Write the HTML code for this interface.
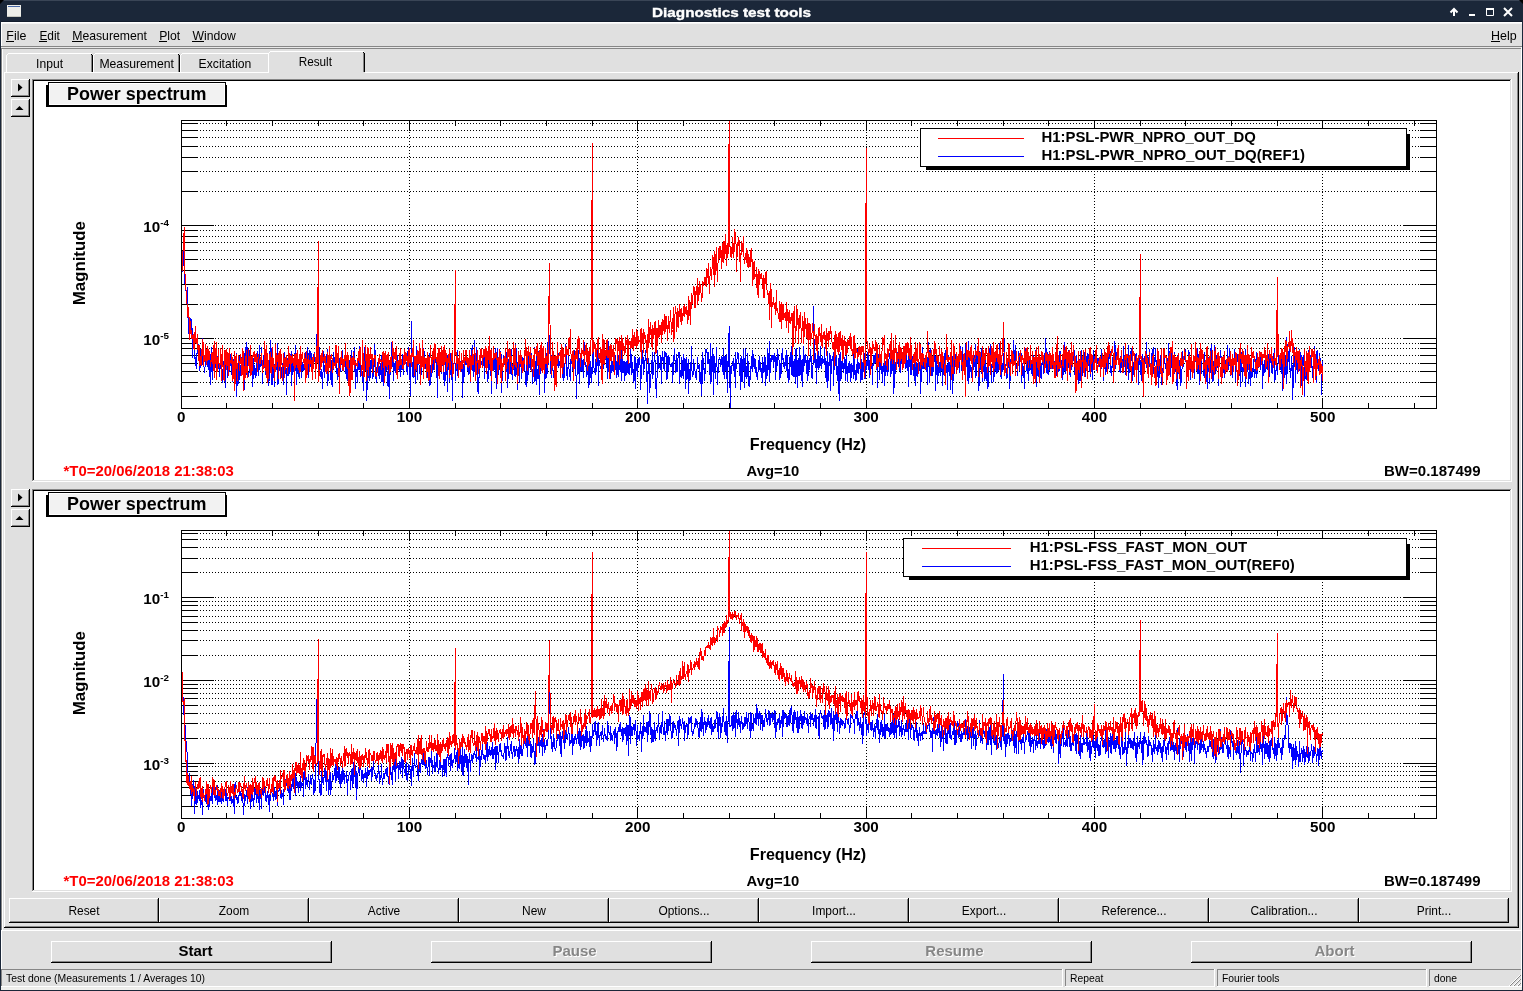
<!DOCTYPE html>
<html><head><meta charset="utf-8"><title>Diagnostics test tools</title>
<style>html,body{margin:0;padding:0;width:1523px;height:991px;overflow:hidden;background:#e0e0e0}
svg text{font-family:"Liberation Sans", sans-serif}</style></head>
<body><svg width="1523" height="991" viewBox="0 0 1523 991" style="display:block">
<rect x="0" y="0" width="1523" height="991" fill="#e0e0e0" />
<rect x="0" y="0" width="1523" height="22" fill="#1b2739" />
<rect x="0" y="0" width="1523" height="1" fill="#3a4556" />
<rect x="0" y="0" width="1" height="991" fill="#1b2739" />
<rect x="1522" y="0" width="1" height="991" fill="#1b2739" />
<rect x="0" y="990" width="1523" height="1" fill="#1b2739" />
<path d="M0 0H4L0 4Z M1523 0H1519L1523 4Z" fill="#000"/>
<rect x="7" y="5" width="14" height="12" fill="#eeeeea" />
<rect x="8" y="6" width="12" height="1" fill="#4a6aa8" />
<rect x="7" y="16" width="14" height="1" fill="#c8c8c0" />
<g fill="none" stroke="#fff" stroke-width="2"><path d="M1454 16 V9.5 M1450.5 12.5 L1454 9 L1457.5 12.5"/><path d="M1486.5 8.5 H1493.5 V15.5 H1486.5 Z" stroke-width="1"/><path d="M1504 8 L1512 16 M1512 8 L1504 16"/></g>
<rect x="1469" y="14" width="6" height="2" fill="#fff" />
<rect x="1486" y="8" width="8" height="2" fill="#fff" />
<rect x="1" y="22" width="1521" height="1" fill="#ffffff" />
<rect x="1" y="23" width="1521" height="1" fill="#f4f4f4" />
<rect x="1" y="22" width="1" height="24" fill="#ffffff" />
<rect x="1" y="21" width="1521" height="1" fill="#121c2c" />
<rect x="6" y="41" width="8" height="1" fill="#000" />
<rect x="39" y="41" width="8" height="1" fill="#000" />
<rect x="72" y="41" width="11" height="1" fill="#000" />
<rect x="159" y="41" width="8" height="1" fill="#000" />
<rect x="192" y="41" width="12" height="1" fill="#000" />
<rect x="1491" y="41" width="9" height="1" fill="#000" />
<rect x="1" y="46" width="1521" height="1" fill="#868686" />
<rect x="1" y="47" width="1521" height="1" fill="#e8e8e8" />
<rect x="1" y="48" width="1521" height="1" fill="#868686" />
<rect x="1" y="49" width="1" height="881" fill="#868686" />
<rect x="2" y="49" width="1" height="881" fill="#ffffff" />
<rect x="1521" y="47" width="1" height="942" fill="#ffffff" />
<rect x="4" y="72" width="1515" height="1" fill="#ffffff" />
<rect x="4" y="72" width="1" height="856" fill="#ffffff" />
<rect x="1517" y="73" width="1" height="854" fill="#868686" />
<rect x="1518" y="72" width="1" height="856" fill="#000" />
<rect x="5" y="926" width="1513" height="1" fill="#868686" />
<rect x="4" y="927" width="1515" height="1" fill="#000" />
<rect x="6" y="53" width="87" height="20" fill="#e0e0e0" />
<rect x="8" y="53" width="84" height="1" fill="#ffffff" />
<rect x="7" y="54" width="1" height="1" fill="#ffffff" />
<rect x="6" y="55" width="1" height="18" fill="#ffffff" />
<rect x="91" y="54" width="1" height="1" fill="#000" />
<rect x="92" y="55" width="1" height="17" fill="#000" />
<rect x="91" y="55" width="1" height="17" fill="#868686" />
<rect x="93" y="53" width="87" height="20" fill="#e0e0e0" />
<rect x="95" y="53" width="84" height="1" fill="#ffffff" />
<rect x="94" y="54" width="1" height="1" fill="#ffffff" />
<rect x="93" y="55" width="1" height="18" fill="#ffffff" />
<rect x="178" y="54" width="1" height="1" fill="#000" />
<rect x="179" y="55" width="1" height="17" fill="#000" />
<rect x="178" y="55" width="1" height="17" fill="#868686" />
<rect x="180" y="53" width="90" height="20" fill="#e0e0e0" />
<rect x="182" y="53" width="87" height="1" fill="#ffffff" />
<rect x="181" y="54" width="1" height="1" fill="#ffffff" />
<rect x="180" y="55" width="1" height="18" fill="#ffffff" />
<rect x="268" y="54" width="1" height="1" fill="#000" />
<rect x="269" y="55" width="1" height="17" fill="#000" />
<rect x="268" y="55" width="1" height="17" fill="#868686" />
<rect x="268" y="51" width="97" height="22" fill="#e0e0e0" />
<rect x="270" y="51" width="94" height="1" fill="#ffffff" />
<rect x="269" y="52" width="1" height="1" fill="#ffffff" />
<rect x="268" y="53" width="1" height="20" fill="#ffffff" />
<rect x="363" y="52" width="1" height="1" fill="#000" />
<rect x="364" y="53" width="1" height="19" fill="#000" />
<rect x="363" y="53" width="1" height="19" fill="#868686" />
<rect x="6" y="72" width="87" height="1" fill="#ffffff" />
<rect x="93" y="72" width="87" height="1" fill="#ffffff" />
<rect x="180" y="72" width="88" height="1" fill="#ffffff" />
<rect x="269" y="72" width="95" height="1" fill="#e0e0e0" />
<rect x="32" y="79" width="1480" height="403" fill="#ffffff" />
<rect x="32" y="79" width="1480" height="1" fill="#868686" />
<rect x="32" y="79" width="1" height="403" fill="#868686" />
<rect x="33" y="80" width="1478" height="1" fill="#000" />
<rect x="33" y="80" width="1" height="401" fill="#000" />
<rect x="33" y="480" width="1479" height="1" fill="#e0e0e0" />
<rect x="1510" y="80" width="1" height="401" fill="#e0e0e0" />
<rect x="32" y="481" width="1480" height="1" fill="#ffffff" />
<rect x="1511" y="79" width="1" height="403" fill="#ffffff" />
<rect x="11" y="79" width="19" height="18" fill="#e0e0e0" />
<rect x="11" y="79" width="18" height="1" fill="#ffffff" />
<rect x="11" y="79" width="1" height="17" fill="#ffffff" />
<rect x="12" y="95" width="17" height="1" fill="#868686" />
<rect x="28" y="80" width="1" height="16" fill="#868686" />
<rect x="11" y="96" width="19" height="1" fill="#000" />
<rect x="29" y="79" width="1" height="18" fill="#000" />
<rect x="11" y="99" width="19" height="18" fill="#e0e0e0" />
<rect x="11" y="99" width="18" height="1" fill="#ffffff" />
<rect x="11" y="99" width="1" height="17" fill="#ffffff" />
<rect x="12" y="115" width="17" height="1" fill="#868686" />
<rect x="28" y="100" width="1" height="16" fill="#868686" />
<rect x="11" y="116" width="19" height="1" fill="#000" />
<rect x="29" y="99" width="1" height="18" fill="#000" />
<path d="M18 83.5 L22.5 87.5 L18 91.5 Z" fill="#000"/>
<path d="M15.5 110 L19.5 106 L23.5 110 Z" fill="#000"/>
<rect x="32" y="489" width="1480" height="403" fill="#ffffff" />
<rect x="32" y="489" width="1480" height="1" fill="#868686" />
<rect x="32" y="489" width="1" height="403" fill="#868686" />
<rect x="33" y="490" width="1478" height="1" fill="#000" />
<rect x="33" y="490" width="1" height="401" fill="#000" />
<rect x="33" y="890" width="1479" height="1" fill="#e0e0e0" />
<rect x="1510" y="490" width="1" height="401" fill="#e0e0e0" />
<rect x="32" y="891" width="1480" height="1" fill="#ffffff" />
<rect x="1511" y="489" width="1" height="403" fill="#ffffff" />
<rect x="11" y="489" width="19" height="18" fill="#e0e0e0" />
<rect x="11" y="489" width="18" height="1" fill="#ffffff" />
<rect x="11" y="489" width="1" height="17" fill="#ffffff" />
<rect x="12" y="505" width="17" height="1" fill="#868686" />
<rect x="28" y="490" width="1" height="16" fill="#868686" />
<rect x="11" y="506" width="19" height="1" fill="#000" />
<rect x="29" y="489" width="1" height="18" fill="#000" />
<rect x="11" y="509" width="19" height="18" fill="#e0e0e0" />
<rect x="11" y="509" width="18" height="1" fill="#ffffff" />
<rect x="11" y="509" width="1" height="17" fill="#ffffff" />
<rect x="12" y="525" width="17" height="1" fill="#868686" />
<rect x="28" y="510" width="1" height="16" fill="#868686" />
<rect x="11" y="526" width="19" height="1" fill="#000" />
<rect x="29" y="509" width="1" height="18" fill="#000" />
<path d="M18 493.5 L22.5 497.5 L18 501.5 Z" fill="#000"/>
<path d="M15.5 520 L19.5 516 L23.5 520 Z" fill="#000"/>
<rect x="9" y="898" width="150" height="25" fill="#e0e0e0" />
<rect x="9" y="898" width="149" height="1" fill="#ffffff" />
<rect x="9" y="898" width="1" height="24" fill="#ffffff" />
<rect x="10" y="921" width="148" height="1" fill="#868686" />
<rect x="157" y="899" width="1" height="23" fill="#868686" />
<rect x="9" y="922" width="150" height="1" fill="#000" />
<rect x="158" y="898" width="1" height="25" fill="#000" />
<rect x="159" y="898" width="150" height="25" fill="#e0e0e0" />
<rect x="159" y="898" width="149" height="1" fill="#ffffff" />
<rect x="159" y="898" width="1" height="24" fill="#ffffff" />
<rect x="160" y="921" width="148" height="1" fill="#868686" />
<rect x="307" y="899" width="1" height="23" fill="#868686" />
<rect x="159" y="922" width="150" height="1" fill="#000" />
<rect x="308" y="898" width="1" height="25" fill="#000" />
<rect x="309" y="898" width="150" height="25" fill="#e0e0e0" />
<rect x="309" y="898" width="149" height="1" fill="#ffffff" />
<rect x="309" y="898" width="1" height="24" fill="#ffffff" />
<rect x="310" y="921" width="148" height="1" fill="#868686" />
<rect x="457" y="899" width="1" height="23" fill="#868686" />
<rect x="309" y="922" width="150" height="1" fill="#000" />
<rect x="458" y="898" width="1" height="25" fill="#000" />
<rect x="459" y="898" width="150" height="25" fill="#e0e0e0" />
<rect x="459" y="898" width="149" height="1" fill="#ffffff" />
<rect x="459" y="898" width="1" height="24" fill="#ffffff" />
<rect x="460" y="921" width="148" height="1" fill="#868686" />
<rect x="607" y="899" width="1" height="23" fill="#868686" />
<rect x="459" y="922" width="150" height="1" fill="#000" />
<rect x="608" y="898" width="1" height="25" fill="#000" />
<rect x="609" y="898" width="150" height="25" fill="#e0e0e0" />
<rect x="609" y="898" width="149" height="1" fill="#ffffff" />
<rect x="609" y="898" width="1" height="24" fill="#ffffff" />
<rect x="610" y="921" width="148" height="1" fill="#868686" />
<rect x="757" y="899" width="1" height="23" fill="#868686" />
<rect x="609" y="922" width="150" height="1" fill="#000" />
<rect x="758" y="898" width="1" height="25" fill="#000" />
<rect x="759" y="898" width="150" height="25" fill="#e0e0e0" />
<rect x="759" y="898" width="149" height="1" fill="#ffffff" />
<rect x="759" y="898" width="1" height="24" fill="#ffffff" />
<rect x="760" y="921" width="148" height="1" fill="#868686" />
<rect x="907" y="899" width="1" height="23" fill="#868686" />
<rect x="759" y="922" width="150" height="1" fill="#000" />
<rect x="908" y="898" width="1" height="25" fill="#000" />
<rect x="909" y="898" width="150" height="25" fill="#e0e0e0" />
<rect x="909" y="898" width="149" height="1" fill="#ffffff" />
<rect x="909" y="898" width="1" height="24" fill="#ffffff" />
<rect x="910" y="921" width="148" height="1" fill="#868686" />
<rect x="1057" y="899" width="1" height="23" fill="#868686" />
<rect x="909" y="922" width="150" height="1" fill="#000" />
<rect x="1058" y="898" width="1" height="25" fill="#000" />
<rect x="1059" y="898" width="150" height="25" fill="#e0e0e0" />
<rect x="1059" y="898" width="149" height="1" fill="#ffffff" />
<rect x="1059" y="898" width="1" height="24" fill="#ffffff" />
<rect x="1060" y="921" width="148" height="1" fill="#868686" />
<rect x="1207" y="899" width="1" height="23" fill="#868686" />
<rect x="1059" y="922" width="150" height="1" fill="#000" />
<rect x="1208" y="898" width="1" height="25" fill="#000" />
<rect x="1209" y="898" width="150" height="25" fill="#e0e0e0" />
<rect x="1209" y="898" width="149" height="1" fill="#ffffff" />
<rect x="1209" y="898" width="1" height="24" fill="#ffffff" />
<rect x="1210" y="921" width="148" height="1" fill="#868686" />
<rect x="1357" y="899" width="1" height="23" fill="#868686" />
<rect x="1209" y="922" width="150" height="1" fill="#000" />
<rect x="1358" y="898" width="1" height="25" fill="#000" />
<rect x="1359" y="898" width="150" height="25" fill="#e0e0e0" />
<rect x="1359" y="898" width="149" height="1" fill="#ffffff" />
<rect x="1359" y="898" width="1" height="24" fill="#ffffff" />
<rect x="1360" y="921" width="148" height="1" fill="#868686" />
<rect x="1507" y="899" width="1" height="23" fill="#868686" />
<rect x="1359" y="922" width="150" height="1" fill="#000" />
<rect x="1508" y="898" width="1" height="25" fill="#000" />
<rect x="1" y="930" width="1521" height="1" fill="#ffffff" />
<rect x="1" y="930" width="1" height="39" fill="#ffffff" />
<rect x="51" y="941" width="281" height="22" fill="#e0e0e0" />
<rect x="51" y="941" width="280" height="1" fill="#ffffff" />
<rect x="51" y="941" width="1" height="21" fill="#ffffff" />
<rect x="52" y="961" width="279" height="1" fill="#868686" />
<rect x="330" y="942" width="1" height="20" fill="#868686" />
<rect x="51" y="962" width="281" height="1" fill="#000" />
<rect x="331" y="941" width="1" height="22" fill="#000" />
<rect x="431" y="941" width="281" height="22" fill="#e0e0e0" />
<rect x="431" y="941" width="280" height="1" fill="#ffffff" />
<rect x="431" y="941" width="1" height="21" fill="#ffffff" />
<rect x="432" y="961" width="279" height="1" fill="#868686" />
<rect x="710" y="942" width="1" height="20" fill="#868686" />
<rect x="431" y="962" width="281" height="1" fill="#000" />
<rect x="711" y="941" width="1" height="22" fill="#000" />
<rect x="811" y="941" width="281" height="22" fill="#e0e0e0" />
<rect x="811" y="941" width="280" height="1" fill="#ffffff" />
<rect x="811" y="941" width="1" height="21" fill="#ffffff" />
<rect x="812" y="961" width="279" height="1" fill="#868686" />
<rect x="1090" y="942" width="1" height="20" fill="#868686" />
<rect x="811" y="962" width="281" height="1" fill="#000" />
<rect x="1091" y="941" width="1" height="22" fill="#000" />
<rect x="1191" y="941" width="281" height="22" fill="#e0e0e0" />
<rect x="1191" y="941" width="280" height="1" fill="#ffffff" />
<rect x="1191" y="941" width="1" height="21" fill="#ffffff" />
<rect x="1192" y="961" width="279" height="1" fill="#868686" />
<rect x="1470" y="942" width="1" height="20" fill="#868686" />
<rect x="1191" y="962" width="281" height="1" fill="#000" />
<rect x="1471" y="941" width="1" height="22" fill="#000" />
<rect x="1" y="969" width="1062" height="1" fill="#868686" />
<rect x="1" y="969" width="1" height="17" fill="#868686" />
<rect x="1" y="986" width="1062" height="1" fill="#ffffff" />
<rect x="1062" y="969" width="1" height="18" fill="#ffffff" />
<rect x="1065" y="969" width="150" height="1" fill="#868686" />
<rect x="1065" y="969" width="1" height="17" fill="#868686" />
<rect x="1065" y="986" width="150" height="1" fill="#ffffff" />
<rect x="1214" y="969" width="1" height="18" fill="#ffffff" />
<rect x="1217" y="969" width="210" height="1" fill="#868686" />
<rect x="1217" y="969" width="1" height="17" fill="#868686" />
<rect x="1217" y="986" width="210" height="1" fill="#ffffff" />
<rect x="1426" y="969" width="1" height="18" fill="#ffffff" />
<rect x="1429" y="969" width="93" height="1" fill="#868686" />
<rect x="1429" y="969" width="1" height="17" fill="#868686" />
<rect x="1429" y="986" width="93" height="1" fill="#ffffff" />
<rect x="1521" y="969" width="1" height="18" fill="#ffffff" />
<rect x="1" y="987" width="1521" height="1" fill="#ececea" />
<rect x="1" y="988" width="1521" height="1" fill="#f0f0ee" />
<rect x="1" y="989" width="1521" height="1" fill="#f0f0ee" />
<rect x="0" y="990" width="1523" height="1" fill="#1b2739" />
<g stroke-width="1" shape-rendering="crispEdges"><path d="M1510 986 L1521 975 M1514 986 L1521 979 M1518 986 L1521 983" stroke="#ffffff" transform="translate(-1 0)"/><path d="M1510 986 L1521 975 M1514 986 L1521 979 M1518 986 L1521 983" stroke="#868686"/></g>
<rect x="181" y="396" width="17" height="1" fill="#000" />
<rect x="1420" y="396" width="17" height="1" fill="#000" />
<rect x="181" y="382" width="17" height="1" fill="#000" />
<rect x="1420" y="382" width="17" height="1" fill="#000" />
<rect x="181" y="371" width="17" height="1" fill="#000" />
<rect x="1420" y="371" width="17" height="1" fill="#000" />
<rect x="181" y="363" width="17" height="1" fill="#000" />
<rect x="1420" y="363" width="17" height="1" fill="#000" />
<rect x="181" y="355" width="17" height="1" fill="#000" />
<rect x="1420" y="355" width="17" height="1" fill="#000" />
<rect x="181" y="348" width="17" height="1" fill="#000" />
<rect x="1420" y="348" width="17" height="1" fill="#000" />
<rect x="181" y="343" width="17" height="1" fill="#000" />
<rect x="1420" y="343" width="17" height="1" fill="#000" />
<rect x="181" y="338" width="33" height="1" fill="#000" />
<rect x="1404" y="338" width="33" height="1" fill="#000" />
<rect x="181" y="304" width="17" height="1" fill="#000" />
<rect x="1420" y="304" width="17" height="1" fill="#000" />
<rect x="181" y="284" width="17" height="1" fill="#000" />
<rect x="1420" y="284" width="17" height="1" fill="#000" />
<rect x="181" y="270" width="17" height="1" fill="#000" />
<rect x="1420" y="270" width="17" height="1" fill="#000" />
<rect x="181" y="259" width="17" height="1" fill="#000" />
<rect x="1420" y="259" width="17" height="1" fill="#000" />
<rect x="181" y="250" width="17" height="1" fill="#000" />
<rect x="1420" y="250" width="17" height="1" fill="#000" />
<rect x="181" y="242" width="17" height="1" fill="#000" />
<rect x="1420" y="242" width="17" height="1" fill="#000" />
<rect x="181" y="236" width="17" height="1" fill="#000" />
<rect x="1420" y="236" width="17" height="1" fill="#000" />
<rect x="181" y="230" width="17" height="1" fill="#000" />
<rect x="1420" y="230" width="17" height="1" fill="#000" />
<rect x="181" y="225" width="33" height="1" fill="#000" />
<rect x="1404" y="225" width="33" height="1" fill="#000" />
<rect x="181" y="191" width="17" height="1" fill="#000" />
<rect x="1420" y="191" width="17" height="1" fill="#000" />
<rect x="181" y="171" width="17" height="1" fill="#000" />
<rect x="1420" y="171" width="17" height="1" fill="#000" />
<rect x="181" y="157" width="17" height="1" fill="#000" />
<rect x="1420" y="157" width="17" height="1" fill="#000" />
<rect x="181" y="146" width="17" height="1" fill="#000" />
<rect x="1420" y="146" width="17" height="1" fill="#000" />
<rect x="181" y="137" width="17" height="1" fill="#000" />
<rect x="1420" y="137" width="17" height="1" fill="#000" />
<rect x="181" y="130" width="17" height="1" fill="#000" />
<rect x="1420" y="130" width="17" height="1" fill="#000" />
<rect x="181" y="123" width="17" height="1" fill="#000" />
<rect x="1420" y="123" width="17" height="1" fill="#000" />
<g shape-rendering="crispEdges" stroke-width="1" fill="none"><path d="M182 396.5H1436" stroke="#000" stroke-dasharray="1 2"/><path d="M182 382.5H1436" stroke="#000" stroke-dasharray="1 2"/><path d="M182 371.5H1436" stroke="#000" stroke-dasharray="1 2"/><path d="M182 363.5H1436" stroke="#000" stroke-dasharray="1 2"/><path d="M182 355.5H1436" stroke="#000" stroke-dasharray="1 2"/><path d="M182 348.5H1436" stroke="#000" stroke-dasharray="1 2"/><path d="M182 343.5H1436" stroke="#000" stroke-dasharray="1 2"/><path d="M182 338.5H1436" stroke="#000" stroke-dasharray="1 2"/><path d="M182 304.5H1436" stroke="#000" stroke-dasharray="1 2"/><path d="M182 284.5H1436" stroke="#000" stroke-dasharray="1 2"/><path d="M182 270.5H1436" stroke="#000" stroke-dasharray="1 2"/><path d="M182 259.5H1436" stroke="#000" stroke-dasharray="1 2"/><path d="M182 250.5H1436" stroke="#000" stroke-dasharray="1 2"/><path d="M182 242.5H1436" stroke="#000" stroke-dasharray="1 2"/><path d="M182 236.5H1436" stroke="#000" stroke-dasharray="1 2"/><path d="M182 230.5H1436" stroke="#000" stroke-dasharray="1 2"/><path d="M182 225.5H1436" stroke="#000" stroke-dasharray="1 2"/><path d="M182 191.5H1436" stroke="#000" stroke-dasharray="1 2"/><path d="M182 171.5H1436" stroke="#000" stroke-dasharray="1 2"/><path d="M182 157.5H1436" stroke="#000" stroke-dasharray="1 2"/><path d="M182 146.5H1436" stroke="#000" stroke-dasharray="1 2"/><path d="M182 137.5H1436" stroke="#000" stroke-dasharray="1 2"/><path d="M182 130.5H1436" stroke="#000" stroke-dasharray="1 2"/><path d="M182 123.5H1436" stroke="#000" stroke-dasharray="1 2"/><path d="M409.5 123V408" stroke="#000" stroke-dasharray="1 2"/><path d="M637.5 123V408" stroke="#000" stroke-dasharray="1 2"/><path d="M866.5 123V408" stroke="#000" stroke-dasharray="1 2"/><path d="M1094.5 123V408" stroke="#000" stroke-dasharray="1 2"/><path d="M1322.5 123V408" stroke="#000" stroke-dasharray="1 2"/></g>
<rect x="226" y="403" width="1" height="5" fill="#000" />
<rect x="226" y="121" width="1" height="5" fill="#000" />
<rect x="272" y="403" width="1" height="5" fill="#000" />
<rect x="272" y="121" width="1" height="5" fill="#000" />
<rect x="318" y="403" width="1" height="5" fill="#000" />
<rect x="318" y="121" width="1" height="5" fill="#000" />
<rect x="363" y="403" width="1" height="5" fill="#000" />
<rect x="363" y="121" width="1" height="5" fill="#000" />
<rect x="409" y="398" width="1" height="10" fill="#000" />
<rect x="409" y="121" width="1" height="10" fill="#000" />
<rect x="455" y="403" width="1" height="5" fill="#000" />
<rect x="455" y="121" width="1" height="5" fill="#000" />
<rect x="500" y="403" width="1" height="5" fill="#000" />
<rect x="500" y="121" width="1" height="5" fill="#000" />
<rect x="546" y="403" width="1" height="5" fill="#000" />
<rect x="546" y="121" width="1" height="5" fill="#000" />
<rect x="592" y="403" width="1" height="5" fill="#000" />
<rect x="592" y="121" width="1" height="5" fill="#000" />
<rect x="637" y="398" width="1" height="10" fill="#000" />
<rect x="637" y="121" width="1" height="10" fill="#000" />
<rect x="683" y="403" width="1" height="5" fill="#000" />
<rect x="683" y="121" width="1" height="5" fill="#000" />
<rect x="729" y="403" width="1" height="5" fill="#000" />
<rect x="729" y="121" width="1" height="5" fill="#000" />
<rect x="774" y="403" width="1" height="5" fill="#000" />
<rect x="774" y="121" width="1" height="5" fill="#000" />
<rect x="820" y="403" width="1" height="5" fill="#000" />
<rect x="820" y="121" width="1" height="5" fill="#000" />
<rect x="866" y="398" width="1" height="10" fill="#000" />
<rect x="866" y="121" width="1" height="10" fill="#000" />
<rect x="911" y="403" width="1" height="5" fill="#000" />
<rect x="911" y="121" width="1" height="5" fill="#000" />
<rect x="957" y="403" width="1" height="5" fill="#000" />
<rect x="957" y="121" width="1" height="5" fill="#000" />
<rect x="1003" y="403" width="1" height="5" fill="#000" />
<rect x="1003" y="121" width="1" height="5" fill="#000" />
<rect x="1048" y="403" width="1" height="5" fill="#000" />
<rect x="1048" y="121" width="1" height="5" fill="#000" />
<rect x="1094" y="398" width="1" height="10" fill="#000" />
<rect x="1094" y="121" width="1" height="10" fill="#000" />
<rect x="1140" y="403" width="1" height="5" fill="#000" />
<rect x="1140" y="121" width="1" height="5" fill="#000" />
<rect x="1185" y="403" width="1" height="5" fill="#000" />
<rect x="1185" y="121" width="1" height="5" fill="#000" />
<rect x="1231" y="403" width="1" height="5" fill="#000" />
<rect x="1231" y="121" width="1" height="5" fill="#000" />
<rect x="1277" y="403" width="1" height="5" fill="#000" />
<rect x="1277" y="121" width="1" height="5" fill="#000" />
<rect x="1322" y="398" width="1" height="10" fill="#000" />
<rect x="1322" y="121" width="1" height="10" fill="#000" />
<rect x="1368" y="403" width="1" height="5" fill="#000" />
<rect x="1368" y="121" width="1" height="5" fill="#000" />
<rect x="1414" y="403" width="1" height="5" fill="#000" />
<rect x="1414" y="121" width="1" height="5" fill="#000" />
<rect x="181" y="120" width="1256" height="1" fill="#000" />
<rect x="181" y="408" width="1256" height="1" fill="#000" />
<rect x="181" y="120" width="1" height="289" fill="#000" />
<rect x="1436" y="120" width="1" height="289" fill="#000" />
<svg x="182" y="121" width="1254" height="287" viewBox="182 121 1254 287" overflow="hidden">
<path d="M181.5 275.5l0 6l1 -18l0 8l1 -11l0 -10l1 9l0 5l0 16l1 6l0 0l1 9l0 0l1 -8l0 21l0 -7l1 32l0 -17l1 20l0 -6l1 -3l0 -6l0 -3l1 2l0 13l1 -5l0 29l1 -17l0 -7l0 1l1 17l0 0l1 14l0 -5l1 -6l0 -2l0 16l1 -28l0 4l1 5l0 -5l1 26l0 -19l0 9l1 -11l0 18l1 -17l0 12l1 -24l0 24l0 2l1 -11l0 8l1 11l0 -4l1 -3l0 -10l0 0l1 -3l0 8l1 6l0 -9l1 12l0 -13l0 2l1 -4l0 15l1 15l0 -24l1 -13l0 14l0 3l1 15l0 -16l1 -2l0 -3l1 7l0 -5l0 16l1 -16l0 -5l1 11l0 -11l1 13l0 2l0 -14l1 12l0 -3l1 2l0 9l1 -15l0 -5l0 -5l1 10l0 12l1 -4l0 13l1 -19l0 1l0 -3l1 14l0 1l1 11l0 -26l1 6l0 -9l0 -2l1 21l0 -10l1 -6l0 11l1 -8l0 7l0 -2l1 -7l0 -8l1 9l0 7l1 9l0 -21l0 23l1 -17l0 -5l1 23l0 -10l1 -11l0 19l0 -13l1 -14l0 43l1 -20l0 8l1 -23l0 22l0 -2l1 -4l0 -21l1 16l0 3l1 -4l0 -9l0 -5l1 5l0 -1l1 19l0 -8l1 -19l0 36l0 -26l1 14l0 -26l1 -9l0 32l1 -13l0 -15l0 26l1 0l0 4l1 -6l0 -20l1 -1l0 6l0 -3l1 12l0 0l1 -3l0 25l1 -15l0 -14l0 3l1 9l0 2l1 6l0 -7l1 -5l0 6l0 4l1 -24l0 18l1 -11l0 17l1 -30l0 19l0 5l1 -12l0 9l1 -3l0 -16l1 36l0 -16l0 10l1 -22l0 13l1 -16l0 9l1 13l0 -8l0 -15l1 3l0 17l1 -14l0 15l1 -4l0 -9l0 26l1 -8l0 -26l1 20l0 -31l1 44l0 -2l0 -34l1 20l0 16l1 -13l0 -8l1 20l0 3l0 -21l1 -3l0 -6l1 1l0 -3l1 30l0 -5l0 -36l1 36l0 4l1 -24l0 -4l1 3l0 -9l0 7l1 21l0 -6l1 3l0 -11l1 21l0 -20l0 1l1 -13l0 12l1 -4l0 5l1 16l0 -14l0 27l1 -36l0 0l1 11l0 6l1 -3l0 -12l0 -7l1 1l0 4l1 27l0 -34l1 7l0 16l0 -14l1 -1l0 12l1 -14l0 13l0 -9l1 -16l0 12l1 27l0 -25l1 -6l0 5l0 13l1 5l0 -7l1 9l0 -20l1 -2l0 -8l0 9l1 5l0 15l1 -13l0 -2l1 6l0 2l0 -6l1 0l0 5l1 -8l0 -9l1 6l0 19l0 -10l1 -15l0 -5l1 30l0 -24l1 8l0 -1l0 -10l1 2l0 14l1 -5l0 -8l1 19l0 -8l0 6l1 -13l0 -3l1 4l0 -6l1 19l0 -4l0 1l1 -4l0 -12l1 -36l0 16l1 20l0 -36l0 16l1 29l0 13l1 2l0 -5l1 0l0 2l0 -4l1 19l0 -9l1 -15l0 -13l1 26l0 -9l0 5l1 -16l0 12l1 1l0 -16l1 31l0 -37l0 14l1 4l0 14l1 -24l0 -3l1 21l0 5l0 -24l1 29l0 -24l1 26l0 -17l1 0l0 -15l0 -2l1 9l0 4l1 -9l0 4l1 -3l0 16l0 -18l1 24l0 -2l1 -12l0 11l1 -5l0 1l0 -14l1 13l0 -2l1 -9l0 0l1 5l0 5l0 -20l1 19l0 -1l1 -8l0 -2l1 9l0 -9l0 11l1 9l0 -17l1 4l0 15l1 -17l0 -8l0 15l1 12l0 -22l1 11l0 -9l1 -12l0 16l0 7l1 -9l0 -3l1 -10l0 12l1 -1l0 -16l0 8l1 34l0 -28l1 16l0 -7l1 2l0 -7l0 18l1 -28l0 15l1 -23l0 17l1 13l0 -19l0 19l1 -10l0 0l1 15l0 -10l1 19l0 -16l0 -4l1 -8l0 -15l1 23l0 -7l1 6l0 1l0 30l1 -21l0 -13l1 -13l0 21l1 6l0 -11l0 -8l1 -1l0 17l1 -20l0 11l1 -2l0 4l0 8l1 -15l0 13l1 -19l0 -13l1 10l0 19l0 2l1 7l0 -15l1 4l0 -9l1 4l0 5l0 4l1 -9l0 12l1 -7l0 -8l1 18l0 -27l0 1l1 1l0 22l1 7l0 -19l1 -6l0 3l0 11l1 1l0 -18l1 6l0 -8l1 30l0 -12l0 6l1 7l0 -28l1 40l0 -29l1 5l0 -8l0 2l1 -3l0 -23l1 13l0 0l1 22l0 3l0 -21l1 11l0 -7l1 9l0 -8l1 -7l0 3l0 -8l1 6l0 13l1 -3l0 -7l1 10l0 -1l0 -12l1 3l0 15l1 -13l0 -4l1 2l0 -8l0 11l1 10l0 -19l1 7l0 -4l1 0l0 -3l0 8l1 -1l0 6l1 6l0 -22l1 -3l0 14l0 -16l1 27l0 -10l1 31l0 -38l1 4l0 -41l0 26l1 30l0 -10l1 11l0 -23l1 17l0 -11l0 10l1 13l0 -20l1 -10l0 -7l1 23l0 10l0 -28l1 4l0 0l1 18l0 0l1 -9l0 7l0 -9l1 5l0 7l1 -17l0 -5l1 -4l0 17l0 5l1 -19l0 7l1 7l0 3l1 1l0 -8l0 3l1 -3l0 16l1 -15l0 2l1 16l0 5l0 -32l1 31l0 -19l1 5l0 1l0 5l1 -6l0 -18l1 17l0 -15l1 -3l0 15l0 -3l1 -1l0 -8l1 16l0 -12l1 39l0 -34l0 -1l1 11l0 -9l1 -8l0 12l1 -7l0 -4l0 4l1 -1l0 13l1 -21l0 13l1 -11l0 25l0 -16l1 19l0 3l1 -26l0 21l1 -25l0 17l0 -15l1 34l0 -35l1 -2l0 15l1 0l0 7l0 5l1 -12l0 -16l1 23l0 -17l1 41l0 -16l0 -18l1 0l0 0l1 -7l0 4l1 0l0 -1l0 18l1 -19l0 -1l1 -10l0 25l1 -13l0 4l0 10l1 -13l0 4l1 -1l0 -4l1 -2l0 11l0 -15l1 16l0 25l1 -28l0 -1l1 -9l0 1l0 16l1 -22l0 0l1 -1l0 9l1 5l0 3l0 -11l1 5l0 10l1 -11l0 9l1 2l0 -4l0 12l1 -26l0 -5l1 -6l0 24l1 2l0 -16l0 21l1 -36l0 28l1 7l0 -5l1 -23l0 11l0 12l1 -13l0 34l1 -14l0 16l1 -29l0 -2l0 6l1 -10l0 1l1 5l0 -1l1 -4l0 7l0 1l1 -4l0 -5l1 -3l0 23l1 -32l0 11l0 5l1 9l0 -10l1 20l0 -10l1 7l0 -10l0 -9l1 10l0 -6l1 10l0 -15l1 35l0 -24l0 -1l1 -2l0 -8l1 12l0 -20l1 16l0 2l0 -7l1 16l0 -29l1 15l0 25l1 -11l0 -30l0 30l1 -7l0 4l1 -9l0 -13l1 5l0 14l0 -20l1 6l0 35l1 -22l0 -2l1 -6l0 3l0 -10l1 3l0 1l1 11l0 -3l1 -6l0 -10l0 4l1 32l0 -30l1 3l0 18l1 -10l0 2l0 -7l1 -11l0 21l1 -24l0 20l1 10l0 -7l0 5l1 -27l0 13l1 12l0 -23l1 24l0 -26l0 -6l1 7l0 8l1 30l0 -27l1 6l0 -5l0 1l1 18l0 -21l1 5l0 -10l1 17l0 5l0 -4l1 -5l0 -12l1 1l0 4l1 5l0 -4l0 -3l1 21l0 2l1 3l0 -15l1 -15l0 24l0 -2l1 -22l0 18l1 -13l0 -2l1 -1l0 11l0 -19l1 5l0 -2l1 30l0 -2l1 -18l0 2l0 -2l1 18l0 -34l1 27l0 6l1 -25l0 -3l0 32l1 -10l0 -5l1 9l0 -27l1 28l0 15l0 -14l1 -13l0 -13l1 16l0 -21l1 17l0 4l0 -4l1 -10l0 9l1 -6l0 33l1 -29l0 15l0 -19l1 -6l0 24l1 -35l0 31l1 -17l0 -4l0 11l1 -28l0 5l1 27l0 3l1 7l0 -23l0 8l1 -1l0 3l1 13l0 -7l1 2l0 -8l0 2l1 1l0 7l1 1l0 -19l1 -1l0 10l0 -1l1 -11l0 14l1 -3l0 -1l1 -4l0 9l0 2l1 -7l0 -1l1 4l0 8l1 6l0 -18l0 -10l1 25l0 -11l1 -6l0 -9l0 -7l1 15l0 13l1 7l0 -7l1 -10l0 -12l0 11l1 14l0 -3l1 8l0 -16l1 -10l0 7l0 -4l1 13l0 -13l1 7l0 -7l1 -5l0 7l0 -9l1 19l0 -16l1 45l0 -13l1 -20l0 -1l0 -5l1 -9l0 23l1 -15l0 25l1 -23l0 3l0 7l1 0l0 -12l1 3l0 10l1 -10l0 3l0 13l1 -35l0 19l1 1l0 3l1 3l0 8l0 -11l1 9l0 -11l1 1l0 23l1 -26l0 23l0 -18l1 -5l0 16l1 -10l0 15l1 -17l0 -15l0 20l1 -24l0 21l1 1l0 2l1 4l0 -16l0 8l1 3l0 2l1 -21l0 15l1 -5l0 25l0 -29l1 7l0 2l1 1l0 2l1 0l0 -12l0 4l1 3l0 -9l1 14l0 -5l1 -5l0 -3l0 9l1 -10l0 0l1 10l0 -8l1 22l0 -8l0 -3l1 -26l0 30l1 -1l0 -15l1 21l0 -9l0 11l1 -26l0 20l1 -3l0 -8l1 10l0 -3l0 1l1 -8l0 12l1 -6l0 -12l1 22l0 -17l0 9l1 5l0 -7l1 -12l0 21l1 -24l0 17l0 -8l1 7l0 3l1 -25l0 34l1 -15l0 -1l0 -5l1 4l0 9l1 -11l0 19l1 -9l0 -10l0 10l1 3l0 -6l1 -14l0 18l1 1l0 -17l0 -6l1 24l0 -1l1 -10l0 -14l1 9l0 16l0 -14l1 3l0 5l1 9l0 5l1 -26l0 13l0 3l1 16l0 -31l1 11l0 -3l1 11l0 -4l0 -12l1 -2l0 9l1 -8l0 -2l1 15l0 17l0 -21l1 10l0 -26l1 -2l0 13l1 -6l0 14l0 3l1 -11l0 -1l1 -4l0 -8l1 17l0 -10l0 3l1 43l0 -32l1 2l0 -15l1 9l0 -1l0 26l1 -9l0 -1l1 -16l0 -6l1 18l0 -27l0 16l1 7l0 -10l1 -5l0 -7l1 15l0 3l0 9l1 18l0 -16l1 -7l0 -24l1 10l0 8l0 -8l1 7l0 -2l1 4l0 -14l1 28l0 -19l0 -1l1 -12l0 9l1 -3l0 11l1 1l0 1l0 -19l1 2l0 3l1 -3l0 26l1 -2l0 -17l0 -4l1 -1l0 15l1 -13l0 5l1 4l0 0l0 0l1 0l0 -3l1 -1l0 20l1 -14l0 -12l0 5l1 -12l0 -1l1 24l0 -6l1 -12l0 17l0 -15l1 15l0 -7l1 -12l0 2l1 -2l0 22l0 9l1 -13l0 3l1 4l0 -20l1 5l0 5l0 8l1 -21l0 24l1 -15l0 -5l1 2l0 13l0 15l1 -16l0 -15l1 21l0 -14l1 -3l0 -3l0 35l1 -24l0 10l1 -16l0 16l1 -33l0 17l0 3l1 8l0 2l1 -4l0 -13l1 6l0 -1l0 2l1 8l0 2l1 3l0 -2l1 -16l0 -5l0 4l1 8l0 -1l1 -3l0 6l0 11l1 -9l0 11l1 -23l0 35l1 -43l0 31l0 -10l1 -15l0 0l1 22l0 -12l1 5l0 -18l0 -6l1 0l0 1l1 4l0 9l1 0l0 -1l0 -10l1 17l0 5l1 -31l0 40l1 -17l0 -11l0 26l1 -33l0 0l1 46l0 -40l1 3l0 15l0 -4l1 -2l0 12l1 -31l0 15l1 9l0 5l0 8l1 -23l0 -1l1 -2l0 0l1 2l0 1l0 5l1 -10l0 1l1 14l0 -6l1 -17l0 3l0 19l1 8l0 -22l1 0l0 14l1 -16l0 16l0 -6l1 28l0 -31l1 5l0 -26l1 -14l0 16l0 22l1 47l0 -45l1 7l0 -8l1 -1l0 -1l0 -2l1 9l0 -12l1 8l0 0l1 21l0 -32l0 -3l1 16l0 -5l1 -8l0 -3l1 11l0 -2l0 -8l1 19l0 3l1 -17l0 31l1 -14l0 -4l0 -15l1 5l0 20l1 -21l0 -11l1 16l0 10l0 12l1 -39l0 27l1 2l0 1l1 -25l0 23l0 -17l1 3l0 23l1 1l0 0l1 -20l0 -1l0 14l1 -20l0 -3l1 15l0 -21l1 7l0 7l0 1l1 3l0 -10l1 2l0 12l1 -5l0 1l0 5l1 6l0 -4l1 -6l0 -9l1 9l0 -1l0 -12l1 10l0 5l1 -3l0 6l1 6l0 -24l0 26l1 -19l0 4l1 -11l0 2l1 27l0 -26l0 -2l1 14l0 7l1 -5l0 -25l1 9l0 4l0 8l1 -28l0 40l1 -17l0 -4l1 -5l0 6l0 -2l1 -4l0 4l1 -4l0 12l1 -10l0 0l0 -4l1 6l0 20l1 -16l0 -6l1 8l0 -5l0 -11l1 8l0 2l1 1l0 19l1 -16l0 14l0 -9l1 5l0 -20l1 6l0 -11l1 18l0 -4l0 3l1 1l0 2l1 -13l0 6l1 9l0 -1l0 -19l1 9l0 13l1 10l0 -10l1 -7l0 -9l0 23l1 -24l0 3l1 -12l0 27l1 2l0 -6l0 -18l1 25l0 -14l1 -3l0 17l1 -27l0 20l0 14l1 -13l0 -22l1 23l0 16l1 -22l0 -8l0 12l1 -22l0 28l1 -1l0 -19l1 9l0 10l0 0l1 12l0 -27l1 12l0 -25l1 16l0 3l0 -1l1 -4l0 -6l1 11l0 1l1 14l0 -15l0 -9l1 19l0 -14l1 -3l0 11l1 -15l0 -6l0 2l1 10l0 16l1 2l0 -5l1 -17l0 -51l0 20l1 27l0 6l1 9l0 -14l1 10l0 -1l0 21l1 -29l0 2l1 -5l0 18l1 -3l0 -11l0 11l1 -1l0 -19l1 22l0 -6l1 -6l0 7l0 -1l1 0l0 -3l1 5l0 -17l1 30l0 -20l0 14l1 -10l0 14l1 12l0 -36l1 25l0 4l0 -10l1 -17l0 12l1 -10l0 35l1 -31l0 8l0 -6l1 -2l0 1l1 -8l0 33l1 -29l0 2l0 8l1 -1l0 -9l1 18l0 -20l0 13l1 -1l0 14l1 -22l0 29l1 13l0 -33l0 -11l1 -4l0 28l1 -3l0 -16l1 -1l0 2l0 6l1 -5l0 9l1 -7l0 -8l1 4l0 -2l0 21l1 -13l0 -15l1 29l0 -15l1 3l0 3l0 -8l1 -3l0 11l1 -8l0 17l1 -6l0 -12l0 0l1 7l0 -5l1 13l0 -26l1 5l0 4l0 7l1 12l0 -10l1 5l0 4l1 -30l0 23l0 -19l1 16l0 4l1 -9l0 -1l1 9l0 9l0 -14l1 -8l0 20l1 0l0 -17l1 9l0 -2l0 -2l1 -14l0 25l1 -18l0 18l1 -16l0 4l0 3l1 -17l0 13l1 -13l0 9l1 16l0 -18l0 5l1 -4l0 -4l1 6l0 -10l1 32l0 -21l0 13l1 -21l0 6l1 -6l0 8l1 -1l0 -7l0 -2l1 9l0 -10l1 35l0 -16l1 -10l0 -2l0 -3l1 -4l0 27l1 -18l0 -5l1 13l0 2l0 -6l1 17l0 -13l1 -6l0 8l1 -1l0 -24l0 39l1 -19l0 -5l1 -1l0 7l1 8l0 0l0 -11l1 7l0 -6l1 -12l0 1l1 7l0 15l0 -10l1 -21l0 28l1 -5l0 -7l1 9l0 23l0 -30l1 -15l0 39l1 -25l0 4l1 -1l0 0l0 0l1 -13l0 9l1 5l0 -14l1 18l0 -5l0 -7l1 5l0 9l1 -17l0 3l1 2l0 -2l0 7l1 -6l0 -1l1 4l0 -9l1 -2l0 0l0 17l1 -15l0 11l1 6l0 -3l1 -14l0 33l0 -13l1 -12l0 -6l1 19l0 -18l1 4l0 14l0 -18l1 0l0 13l1 -5l0 6l1 10l0 -22l0 9l1 -7l0 25l1 -19l0 -4l1 14l0 -13l0 2l1 -5l0 4l1 6l0 -5l1 -6l0 32l0 2l1 -23l0 -9l1 7l0 -21l1 18l0 3l0 -14l1 14l0 -10l1 4l0 0l1 9l0 -6l0 0l1 -8l0 27l1 -34l0 -8l1 40l0 -5l0 -27l1 10l0 -12l1 27l0 -7l1 7l0 -2l0 -10l1 8l0 -15l1 -1l0 6l1 -2l0 -4l0 35l1 -32l0 8l1 17l0 -18l1 0l0 7l0 3l1 -5l0 -5l1 -7l0 17l1 -20l0 3l0 -2l1 29l0 -31l1 20l0 -9l1 -10l0 -3l0 23l1 -25l0 31l1 -16l0 2l1 5l0 17l0 -25l1 7l0 -16l1 13l0 7l1 -8l0 -9l0 31l1 -36l0 0l1 6l0 34l1 -25l0 -3l0 10l1 -3l0 -16l1 -2l0 2l1 17l0 -9l0 -8l1 12l0 -7l1 -1l0 6l1 -13l0 19l0 -12l1 -5l0 -9l1 13l0 4l1 14l0 -31l0 2l1 13l0 8l1 -7l0 -7l1 17l0 -29l0 27l1 -13l0 9l1 -10l0 22l1 5l0 -43l0 27l1 -10l0 20l1 -11l0 -2l0 6l1 -3l0 10l1 -10l0 -4l1 6l0 -15l0 10l1 -7l0 9l1 -22l0 33l1 -26l0 24l0 -24l1 1l0 10l1 0l0 28l1 -9l0 -31l0 12l1 7l0 -9l1 -12l0 17l1 16l0 -6l0 3l1 -26l0 11l1 17l0 -26l1 15l0 9l0 -25l1 27l0 -9l1 -4l0 21l1 -10l0 8l0 -36l1 -2l0 0l1 24l0 -28l1 38l0 -9l0 4l1 -18l0 -7l1 29l0 -32l1 21l0 6l0 -3l1 -5l0 -7l1 -12l0 24l1 -5l0 4l0 -18l1 1l0 15l1 -7l0 -20l1 29l0 -9l0 12l1 3l0 -23l1 14l0 2l1 -5l0 3l0 -2l1 -28l0 19l1 10l0 2l1 1l0 -4l0 11l1 -1l0 -15l1 -2l0 2l1 10l0 -13l0 29l1 -14l0 -13l1 -4l0 5l1 3l0 -2l0 -1l1 -22l0 25l1 -15l0 3l1 21l0 -30l0 30l1 -10l0 0l1 9l0 2l1 -19l0 1l0 -6l1 19l0 -10l1 -7l0 0l1 0l0 29l0 -21l1 3l0 11l1 -9l0 0l1 22l0 -11l0 -23l1 -2l0 -4l1 22l0 -14l1 13l0 -14l0 18l1 -7l0 14l1 -19l0 -3l1 -2l0 5l0 4l1 8l0 -9l1 11l0 -21l1 18l0 -18l0 11l1 -2l0 -1l1 -3l0 -9l1 8l0 28l0 -18l1 -2l0 9l1 -19l0 20l1 -11l0 -3l0 14l1 1l0 -15l1 16l0 -13l1 -5l0 -2l0 6l1 -7l0 16l1 -18l0 -2l1 4l0 -20l0 8l1 27l0 -24l1 25l0 -21l1 13l0 9l0 -18l1 -5l0 19l1 -4l0 -6l1 1l0 0l0 7l1 0l0 -15l1 10l0 -6l1 10l0 -6l0 0l1 4l0 7l1 3l0 -23l1 8l0 9l0 -5l1 0l0 7l1 -1l0 -19l1 7l0 -7l0 0l1 26l0 -17l1 -1l0 20l1 -10l0 -10l0 15l1 -6l0 -26l1 31l0 0l1 -16l0 -3l0 15l1 -13l0 0l1 11l0 -17l1 16l0 -8l0 16l1 -21l0 23l1 -12l0 -10l1 9l0 -5l0 -2l1 -5l0 9l1 -10l0 24l1 -13l0 -2l0 11l1 -15l0 11l1 -3l0 1l1 19l0 0l0 -15l1 12l0 -21l1 8l0 13l1 -30l0 23l0 4l1 -4l0 -11l1 3l0 -8l1 -5l0 21l0 3l1 -19l0 19l1 -10l0 -10l1 1l0 7l0 -11l1 1l0 5l1 12l0 -16l1 1l0 20l0 -16l1 0l0 3l1 16l0 -20l1 -9l0 18l0 -14l1 4l0 0l1 3l0 -8l1 8l0 9l0 -6l1 -6l0 5l1 -5l0 6l1 2l0 -3l0 1l1 -5l0 -3l1 12l0 -19l1 11l0 6l0 -2l1 -6l0 22l1 -22l0 3l1 -2l0 15l0 -7l1 4l0 -14l1 0l0 7l0 -2l1 6l0 -18l1 6l0 -5l1 15l0 -16l0 19l1 6l0 -1l1 -17l0 7l1 7l0 -18l0 25l1 -13l0 -24l1 7l0 20l1 -7l0 -3l0 -6l1 3l0 -5l1 6l0 -9l1 22l0 -7l0 8l1 2l0 -16l1 11l0 -14l1 11l0 -3l0 9l1 2l0 -26l1 17l0 0l1 -6l0 10l0 7l1 -15l0 10l1 -7l0 -4l1 21l0 -24l0 -10l1 27l0 -5l1 3l0 -16l1 -6l0 9l0 3l1 -6l0 26l1 -10l0 -5l1 -6l0 11l0 -7l1 -9l0 2l1 15l0 -18l1 8l0 7l0 -9l1 -1l0 26l1 -37l0 15l1 3l0 -6l0 15l1 -15l0 21l1 -26l0 4l1 3l0 10l0 -1l1 -14l0 1l1 0l0 6l1 -21l0 15l0 10l1 -4l0 -8l1 4l0 11l1 -21l0 17l0 -11l1 15l0 0l1 -3l0 -11l1 -7l0 13l0 -2l1 13l0 -26l1 18l0 -4l1 -6l0 -8l0 14l1 -1l0 4l1 2l0 10l1 -25l0 27l0 9l1 -19l0 2l1 -15l0 7l1 22l0 -24l0 17l1 4l0 -7l1 -12l0 10l1 -18l0 5l0 2l1 4l0 3l1 -1l0 -1l1 -8l0 17l0 -10l1 -11l0 -11l1 15l0 16l1 -16l0 -6l0 24l1 -26l0 16l1 3l0 -11l1 22l0 -20l0 8l1 5l0 -21l1 15l0 4l1 -6l0 20l0 -21l1 -9l0 34l1 -33l0 14l1 7l0 -9l0 -8l1 6l0 19l1 -5l0 -10l1 -3l0 -17l0 2l1 12l0 2l1 -13l0 4l1 -3l0 7l0 -12l1 20l0 19l1 -25l0 7l1 -20l0 21l0 -3l1 -7l0 -9l1 21l0 6l1 -21l0 -4l0 15l1 0l0 -7l1 8l0 -15l1 23l0 -22l0 13l1 -25l0 11l1 12l0 -4l1 -3l0 13l0 -25l1 10l0 5l1 21l0 -23l1 -1l0 3l0 -10l1 20l0 -11l1 -11l0 -1l1 16l0 9l0 -8l1 10l0 -25l1 21l0 -9l1 17l0 -14l0 6l1 15l0 -41l1 19l0 -3l1 16l0 -9l0 13l1 -20l0 -15l1 19l0 -23l1 23l0 14l0 -10l1 -10l0 19l1 -28l0 -7l1 26l0 2l0 -19l1 16l0 -15l1 5l0 7l1 -8l0 26l0 -20l1 -6l0 -2l1 -3l0 -4l1 15l0 -10l0 1l1 21l0 -20l1 0l0 15l1 -19l0 24l0 -5l1 -9l0 -3l1 4l0 4l1 3l0 -27l0 26l1 -10l0 9l1 -7l0 -14l1 24l0 -4l0 7l1 -15l0 0l1 8l0 9l1 -11l0 -9l0 7l1 -6l0 -9l1 12l0 20l1 -25l0 9l0 2l1 -11l0 -2l1 14l0 -11l1 18l0 -13l0 -6l1 -6l0 36l1 -29l0 13l0 -18l1 29l0 -1l1 -17l0 7l1 1l0 4l0 -17l1 28l0 -37l1 18l0 -3l1 -3l0 -9l0 14l1 11l0 6l1 -9l0 -12l1 7l0 -8l0 24l1 -14l0 -12l1 16l0 1l1 -11l0 3l0 -9l1 18l0 -7l1 3l0 -7l1 -14l0 25l0 -16l1 12l0 -2l1 -8l0 4l1 -4l0 -4l0 3l1 -5l0 12l1 -15l0 9l1 -5l0 13l0 17l1 -24l0 0l1 8l0 -12l1 -1l0 -2l0 14l1 -14l0 10l1 2l0 -23l1 14l0 10l0 -5l1 11l0 -21l1 7l0 -4l1 1l0 13l0 -16l1 17l0 -14l1 -6l0 11l1 2l0 -18l0 33l1 -11l0 9l1 -16l0 -2l1 13l0 -1l0 -7l1 -5l0 -8l1 9l0 -6l1 13l0 -5l0 -7l1 13l0 -13l1 33l0 -18l1 -17l0 -1l0 -1l1 19l0 5l1 -12l0 9l1 -37l0 29l0 17l1 -39l0 29l1 -22l0 5l1 -1l0 -10l0 22l1 4l0 6l1 -18l0 -3l1 29l0 14l0 -22l1 -25l0 35l1 -40l0 2l1 13l0 20l0 -14l1 1l0 -17l1 13l0 8l1 -11l0 1l0 0l1 7l0 -21l1 6l0 9l1 13l0 8l0 -30l1 3l0 9l1 -4l0 -8l1 21l0 20l0 -39l1 21l0 -17l1 18l0 -9l1 -10l0 -4l0 8l1 -14l0 30l1 -20l0 -11l1 13l0 -2l0 -4l1 -2l0 4l1 19l0 -10l1 -3l0 4l0 -17l1 14l0 -19l1 16l0 0l1 -11l0 22l0 9l1 -32l0 15l1 5l0 -3l1 -14l0 10l0 2l1 -7l0 2l1 26l0 8l1 -33l0 2" fill="none" stroke="#0000ff" stroke-width="1" shape-rendering="crispEdges"/>
<path d="M181.5 294.5l0 -7l1 -33l0 -2l1 -3l0 -10l1 -12l0 29l0 12l1 11l0 10l1 1l0 2l1 22l0 -11l0 13l1 -9l0 8l1 4l0 20l1 -11l0 -2l0 -5l1 17l0 -8l1 8l0 -1l1 2l0 -6l0 15l1 1l0 -12l1 -11l0 16l1 -4l0 5l0 0l1 -9l0 5l1 21l0 -15l1 15l0 -16l0 21l1 -2l0 -1l1 -13l0 16l1 -26l0 9l0 7l1 -13l0 23l1 -6l0 -3l1 -3l0 7l0 -16l1 8l0 12l1 -7l0 -11l1 6l0 7l0 -9l1 2l0 7l1 1l0 6l1 -8l0 -2l0 -2l1 -2l0 11l1 -18l0 23l1 5l0 4l0 -36l1 18l0 -11l1 31l0 -37l1 29l0 -12l0 7l1 -17l0 10l1 8l0 -3l1 -2l0 -15l0 1l1 32l0 -18l1 -17l0 18l1 6l0 2l0 8l1 -29l0 30l1 -30l0 5l1 14l0 -21l0 5l1 12l0 -13l1 23l0 -18l1 -9l0 21l0 -6l1 -2l0 -1l1 3l0 -10l1 7l0 -1l0 21l1 -4l0 -5l1 -20l0 39l1 -12l0 -19l0 -2l1 -3l0 2l1 24l0 -14l1 -7l0 -1l0 -3l1 10l0 5l1 -16l0 1l1 17l0 -15l0 18l1 -1l0 -26l1 5l0 37l1 -24l0 13l0 -5l1 3l0 -15l1 -12l0 22l1 -2l0 5l0 2l1 -22l0 -6l1 13l0 0l1 13l0 -23l0 -7l1 29l0 -18l1 14l0 -15l1 1l0 -5l0 1l1 9l0 -10l1 10l0 -7l1 5l0 -6l0 0l1 18l0 -14l1 0l0 -3l1 9l0 -4l0 3l1 -5l0 6l1 -10l0 0l1 13l0 6l0 -6l1 -1l0 3l1 -3l0 -24l1 25l0 4l0 -18l1 -7l0 27l1 10l0 -29l1 25l0 -2l0 -13l1 -6l0 -1l1 -4l0 20l1 -15l0 11l0 5l1 -13l0 -13l1 21l0 -7l1 6l0 -2l0 15l1 -16l0 -20l1 17l0 5l1 -11l0 6l0 -4l1 -4l0 25l1 -27l0 9l1 12l0 6l0 -29l1 9l0 5l1 3l0 14l1 -26l0 1l0 -2l1 9l0 15l1 -20l0 12l1 -14l0 5l0 3l1 7l0 3l1 -27l0 20l1 -13l0 9l0 -7l1 16l0 -16l1 1l0 7l1 -1l0 -2l0 -6l1 11l0 -7l1 0l0 42l0 -46l1 13l0 -13l1 -1l0 11l1 -14l0 17l0 -5l1 7l0 -6l1 -9l0 18l1 -2l0 -21l0 -3l1 15l0 3l1 -12l0 3l1 7l0 -4l0 2l1 5l0 -12l1 29l0 -24l1 0l0 -8l0 27l1 -5l0 -10l1 -7l0 0l1 16l0 -4l0 -5l1 -4l0 5l1 -3l0 4l1 15l0 -23l0 16l1 -7l0 -5l1 -7l0 0l1 7l0 -4l0 22l1 -32l0 22l1 -10l0 -23l1 -94l0 33l0 107l1 -11l0 2l1 -5l0 -12l1 11l0 -4l0 -6l1 -6l0 12l1 -3l0 0l1 -5l0 8l0 0l1 -6l0 13l1 4l0 -7l1 -6l0 -9l0 16l1 6l0 -18l1 12l0 -21l1 22l0 2l0 -13l1 -3l0 3l1 2l0 13l1 -7l0 -3l0 0l1 2l0 0l1 3l0 -22l1 13l0 5l0 -18l1 17l0 -2l1 -14l0 12l1 35l0 -19l0 1l1 -15l0 2l1 -11l0 7l1 11l0 -4l0 -7l1 2l0 10l1 -15l0 11l1 -11l0 -13l0 13l1 11l0 -8l1 -6l0 0l1 33l0 -31l0 9l1 8l0 24l1 -39l0 36l1 -24l0 2l0 -11l1 -2l0 22l1 -27l0 9l1 3l0 -7l0 11l1 -7l0 3l1 -1l0 1l1 2l0 -2l0 0l1 -13l0 7l1 4l0 -13l1 10l0 -13l0 8l1 21l0 -10l1 4l0 -29l1 36l0 -24l0 18l1 -6l0 12l1 -31l0 6l1 18l0 -16l0 27l1 -21l0 -12l1 2l0 26l1 -21l0 12l0 -4l1 -15l0 11l1 -4l0 5l1 -5l0 9l0 9l1 -14l0 3l1 -5l0 -1l1 0l0 20l0 -1l1 2l0 -1l1 -7l0 4l1 -10l0 -5l0 6l1 -9l0 9l1 -3l0 -1l1 2l0 7l0 1l1 -14l0 -2l1 -2l0 16l1 -2l0 -13l0 30l1 -31l0 2l1 13l0 -11l1 8l0 -10l0 16l1 -17l0 3l1 18l0 -10l1 -6l0 14l0 -3l1 0l0 -10l1 -5l0 -12l1 12l0 7l0 1l1 -5l0 -3l1 -3l0 -1l1 21l0 4l0 -28l1 29l0 3l1 -18l0 8l1 -15l0 3l0 9l1 -17l0 16l1 -5l0 5l1 1l0 -1l0 4l1 0l0 -8l1 -11l0 15l1 -2l0 -11l0 2l1 7l0 -7l1 5l0 7l1 -13l0 -3l0 17l1 -18l0 14l1 -7l0 4l1 7l0 0l0 -13l1 3l0 0l1 -16l0 9l1 15l0 -9l0 20l1 -13l0 -6l1 14l0 -15l1 6l0 2l0 -13l1 2l0 11l1 -9l0 -11l1 41l0 -29l0 -7l1 15l0 4l1 -2l0 -25l1 16l0 22l0 -14l1 -7l0 11l1 -9l0 -1l1 0l0 19l0 0l1 -10l0 -15l1 7l0 21l1 -1l0 -15l0 -5l1 -5l0 -9l1 24l0 3l0 -9l1 -12l0 12l1 -7l0 -4l1 -9l0 24l0 2l1 -25l0 11l1 6l0 -4l1 1l0 -6l0 12l1 -16l0 24l1 6l0 -30l1 12l0 10l0 -13l1 -11l0 25l1 -12l0 -7l1 -5l0 7l0 17l1 -12l0 -14l1 9l0 -1l1 17l0 -10l0 -7l1 8l0 5l1 -6l0 -1l1 -10l0 8l0 20l1 -15l0 7l1 -16l0 2l1 -5l0 4l0 22l1 -5l0 -4l1 -7l0 -20l1 -70l0 31l0 53l1 -2l0 16l1 -8l0 -4l1 4l0 -2l0 19l1 -15l0 -11l1 20l0 -3l1 0l0 -5l0 -10l1 13l0 2l1 -11l0 -7l1 12l0 -1l0 4l1 -8l0 -7l1 12l0 -12l1 16l0 -10l0 1l1 10l0 -1l1 -16l0 15l1 -10l0 20l0 6l1 -22l0 -3l1 8l0 -14l1 14l0 -5l0 -5l1 0l0 -7l1 10l0 23l1 -10l0 -10l0 11l1 -21l0 1l1 22l0 -13l1 8l0 -9l0 2l1 -12l0 18l1 -19l0 2l1 8l0 0l0 9l1 -18l0 4l1 -1l0 -3l1 15l0 3l0 -21l1 4l0 23l1 -22l0 16l1 -14l0 4l0 -1l1 -20l0 21l1 13l0 -20l1 16l0 14l0 -31l1 19l0 2l1 -24l0 13l1 -2l0 -5l0 3l1 -2l0 3l1 3l0 -7l1 11l0 5l0 15l1 -26l0 11l1 -7l0 -12l1 6l0 4l0 14l1 9l0 -23l1 11l0 -7l1 3l0 -8l0 0l1 5l0 0l1 -15l0 32l1 -22l0 10l0 -4l1 -5l0 -18l1 15l0 -3l1 -4l0 12l0 12l1 -22l0 -2l1 13l0 4l1 0l0 1l0 6l1 -8l0 -23l1 11l0 11l1 -14l0 -6l0 22l1 0l0 -3l1 8l0 12l1 -15l0 -18l0 11l1 2l0 -8l1 8l0 -13l1 8l0 -4l0 13l1 -6l0 11l1 -8l0 6l1 -20l0 13l0 -11l1 3l0 -16l1 14l0 5l1 12l0 -15l0 1l1 -10l0 1l1 16l0 -11l1 5l0 -11l0 10l1 -1l0 16l1 -9l0 0l1 -7l0 0l0 21l1 -14l0 -14l1 1l0 4l1 -2l0 -2l0 -3l1 19l0 -22l1 21l0 -12l1 22l0 -23l0 4l1 -10l0 19l1 6l0 -28l1 11l0 0l0 19l1 -26l0 20l1 7l0 -15l1 3l0 -14l0 16l1 0l0 -2l1 -11l0 17l1 -8l0 -18l0 -10l1 -68l0 31l1 59l0 7l1 -4l0 -1l0 19l1 -32l0 25l1 -4l0 -12l1 8l0 -3l0 34l1 -10l0 -25l1 31l0 -27l1 -6l0 -12l0 22l1 -8l0 2l1 -4l0 0l1 -3l0 23l0 4l1 -19l0 -14l1 29l0 -26l1 19l0 -18l0 9l1 -2l0 0l1 -2l0 -7l0 17l1 -17l0 0l1 5l0 3l1 -4l0 5l0 -17l1 9l0 -2l1 -16l0 24l1 1l0 3l0 3l1 -9l0 2l1 27l0 -30l1 9l0 -1l0 10l1 -17l0 1l1 6l0 -10l1 4l0 8l0 -18l1 -6l0 12l1 -10l0 3l1 25l0 -2l0 -11l1 4l0 -9l1 4l0 0l1 3l0 -8l0 -7l1 20l0 4l1 -19l0 5l1 4l0 -12l0 10l1 18l0 -21l1 16l0 -12l1 -4l0 14l0 -16l1 7l0 -13l1 -3l0 -78l1 -117l0 39l0 171l1 -13l0 11l1 -5l0 -4l1 3l0 11l0 -3l1 -5l0 13l1 -22l0 9l1 -11l0 20l0 -2l1 -2l0 2l1 7l0 -15l1 3l0 7l0 22l1 -45l0 49l1 -44l0 24l1 1l0 -22l0 -2l1 18l0 -6l1 3l0 -15l1 17l0 -19l0 16l1 -4l0 7l1 -11l0 32l1 -34l0 5l0 5l1 -9l0 15l1 -6l0 -2l1 -7l0 19l0 -13l1 23l0 -9l1 -27l0 4l1 1l0 0l0 -4l1 0l0 22l1 -20l0 3l1 -7l0 27l0 -24l1 2l0 16l1 -23l0 14l1 -11l0 9l0 11l1 -14l0 -1l1 6l0 5l1 -17l0 15l0 -9l1 0l0 1l1 -9l0 24l1 -14l0 18l0 -24l1 4l0 1l1 -3l0 7l1 -9l0 7l0 1l1 -18l0 18l1 -12l0 15l1 -8l0 -11l0 2l1 7l0 5l1 -16l0 19l1 -5l0 -11l0 -1l1 8l0 4l1 -3l0 1l1 1l0 -14l0 17l1 13l0 -30l1 8l0 -2l1 18l0 -10l0 -13l1 5l0 0l1 8l0 -7l1 9l0 2l0 -4l1 20l0 -13l1 -30l0 28l1 -13l0 8l0 -15l1 2l0 -7l1 24l0 -17l1 20l0 -25l0 21l1 -17l0 10l1 -7l0 -8l1 -2l0 32l0 -19l1 -6l0 24l1 -24l0 17l1 -25l0 11l0 6l1 -12l0 11l1 -3l0 -8l1 2l0 -6l0 21l1 -23l0 15l1 -14l0 8l1 5l0 -2l0 -17l1 3l0 14l1 -7l0 -8l1 24l0 -12l0 6l1 -18l0 9l1 7l0 -9l1 -5l0 -9l0 5l1 14l0 6l1 -5l0 0l1 -22l0 19l0 15l1 -5l0 -19l1 -7l0 -4l1 10l0 15l0 -15l1 10l0 -18l1 6l0 13l1 -23l0 6l0 6l1 -7l0 12l1 -13l0 16l1 -11l0 7l0 -5l1 0l0 -7l1 -4l0 12l1 -6l0 -4l0 6l1 2l0 -8l1 14l0 3l1 -27l0 17l0 6l1 -19l0 15l1 -13l0 22l1 -30l0 10l0 -11l1 10l0 0l1 -17l0 2l1 -1l0 20l0 -17l1 17l0 -12l1 -9l0 8l1 -16l0 26l0 -3l1 -2l0 -12l1 7l0 -8l0 -5l1 11l0 -8l1 17l0 -7l1 3l0 -7l0 -9l1 1l0 3l1 -3l0 -5l1 6l0 1l0 1l1 -17l0 18l1 -16l0 -1l1 6l0 -13l0 11l1 20l0 -14l1 -6l0 -6l1 12l0 -2l0 -2l1 -12l0 -8l1 4l0 15l1 -23l0 18l0 17l1 -22l0 -3l1 -14l0 13l1 21l0 -10l0 -5l1 -6l0 -11l1 -3l0 12l1 -4l0 1l0 -9l1 22l0 -12l1 -13l0 18l1 -11l0 12l0 -21l1 17l0 -11l1 -13l0 8l1 23l0 -7l0 -11l1 -4l0 14l1 -6l0 -80l1 -54l0 0l0 128l1 2l0 8l1 2l0 -10l1 4l0 2l0 -16l1 19l0 1l1 -28l0 22l1 -19l0 1l0 5l1 11l0 22l1 -27l0 3l1 -10l0 8l0 -7l1 3l0 0l1 40l0 -16l1 -24l0 13l0 -3l1 0l0 -2l1 -13l0 20l1 1l0 3l0 3l1 -10l0 4l1 5l0 -14l1 14l0 4l0 -16l1 17l0 -13l1 6l0 6l1 0l0 0l0 -16l1 11l0 -13l1 21l0 16l1 -11l0 3l0 -14l1 -2l0 17l1 -4l0 2l1 -1l0 12l0 -20l1 13l0 11l1 6l0 -28l1 11l0 4l0 -13l1 7l0 -3l1 -2l0 3l1 4l0 6l0 -6l1 17l0 -22l1 6l0 16l1 -25l0 2l0 4l1 -7l0 14l1 8l0 -2l1 7l0 5l0 -8l1 -4l0 28l1 -25l0 -11l1 10l0 34l0 -19l1 -4l0 -2l1 2l0 -7l1 11l0 -3l0 2l1 0l0 7l1 -24l0 20l1 -2l0 1l0 3l1 1l0 2l1 6l0 -20l1 5l0 7l0 8l1 -19l0 26l1 -24l0 15l1 -15l0 15l0 -7l1 5l0 -3l1 -2l0 8l1 -6l0 -13l0 26l1 -16l0 -2l1 23l0 -20l1 10l0 -8l0 -4l1 13l0 -2l1 -1l0 -7l1 0l0 6l0 35l1 -15l0 -23l1 -10l0 12l1 19l0 -12l0 17l1 -23l0 -14l1 7l0 12l1 -6l0 25l0 -21l1 6l0 -13l1 7l0 -10l1 30l0 -14l0 2l1 0l0 -14l1 9l0 18l1 -12l0 -8l0 -11l1 10l0 -2l1 17l0 -13l1 15l0 -12l0 -9l1 8l0 29l1 -30l0 -2l1 2l0 11l0 9l1 -12l0 3l1 -6l0 -7l1 14l0 22l0 -11l1 -24l0 8l1 5l0 1l1 12l0 -17l0 5l1 -2l0 18l1 -22l0 -4l1 3l0 -5l0 5l1 8l0 2l1 -17l0 21l1 -10l0 12l0 -8l1 -7l0 6l1 -4l0 -3l1 17l0 -7l0 -6l1 20l0 -27l1 12l0 -7l1 0l0 13l0 -15l1 8l0 -8l1 2l0 -7l1 8l0 5l0 -4l1 13l0 -2l1 -4l0 4l1 6l0 13l0 -27l1 -7l0 25l1 -15l0 -3l0 -4l1 6l0 11l1 -18l0 21l1 -22l0 14l0 5l1 -11l0 -9l1 18l0 -9l1 -5l0 25l0 -17l1 15l0 -18l1 1l0 -5l1 18l0 -14l0 3l1 11l0 -9l1 -6l0 13l1 -12l0 1l0 1l1 3l0 -6l1 -6l0 15l1 -11l0 6l0 7l1 -1l0 6l1 -3l0 -16l1 22l0 -14l0 -9l1 22l0 -14l1 9l0 -1l1 2l0 1l0 4l1 -4l0 -7l1 -1l0 6l1 5l0 11l0 -20l1 -2l0 8l1 -5l0 -3l1 0l0 7l0 -6l1 30l0 -17l1 5l0 -104l1 -113l0 38l0 155l1 0l0 2l1 11l0 -2l1 -7l0 7l0 -8l1 6l0 24l1 -16l0 -10l1 2l0 3l0 -12l1 5l0 1l1 3l0 -3l1 3l0 -8l0 -2l1 4l0 24l1 -24l0 22l1 -5l0 -4l0 9l1 -9l0 -12l1 17l0 -5l1 0l0 -7l0 15l1 -28l0 9l1 -8l0 6l1 -9l0 2l0 27l1 -11l0 3l1 -2l0 8l1 7l0 -22l0 8l1 1l0 -7l1 1l0 -6l1 0l0 16l0 -11l1 -16l0 20l1 10l0 -13l1 3l0 -14l0 16l1 8l0 -15l1 -1l0 -12l1 34l0 -8l0 -13l1 13l0 -8l1 5l0 -10l1 -6l0 -1l0 26l1 -20l0 13l1 -8l0 -4l1 21l0 -18l0 2l1 14l0 -21l1 0l0 17l1 -20l0 0l0 19l1 -19l0 11l1 -4l0 -8l1 2l0 11l0 -5l1 3l0 5l1 -21l0 22l1 -8l0 -7l0 4l1 21l0 -9l1 2l0 -7l1 -2l0 0l0 9l1 -20l0 24l1 -11l0 -3l1 -8l0 0l0 5l1 24l0 -11l1 -7l0 -13l1 4l0 0l0 22l1 -15l0 10l1 2l0 -12l1 5l0 3l0 -7l1 8l0 2l1 5l0 -14l1 3l0 4l0 -8l1 -4l0 -19l1 26l0 -3l1 -2l0 1l0 3l1 19l0 -19l1 -6l0 16l1 0l0 -5l0 1l1 -13l0 17l1 -25l0 13l1 -2l0 -10l0 5l1 13l0 -11l1 10l0 4l1 -6l0 9l0 -8l1 -5l0 -7l1 15l0 0l1 -3l0 9l0 -18l1 6l0 13l1 -12l0 3l1 9l0 3l0 -7l1 20l0 -22l1 -5l0 -23l1 27l0 -15l0 6l1 9l0 -1l1 -1l0 0l1 -4l0 9l0 -1l1 -23l0 39l1 -11l0 -1l1 3l0 3l0 -30l1 5l0 5l1 13l0 -7l1 14l0 -22l0 2l1 5l0 11l1 -3l0 -12l1 7l0 -19l0 5l1 3l0 5l1 9l0 -13l1 21l0 7l0 -7l1 -3l0 -15l1 9l0 -10l1 43l0 -30l0 1l1 -14l0 -11l1 17l0 -9l1 1l0 5l0 -6l1 2l0 2l1 6l0 -11l0 -2l1 5l0 -7l1 36l0 -22l1 -8l0 2l0 2l1 5l0 0l1 -3l0 -7l1 2l0 -1l0 2l1 2l0 -2l1 -15l0 38l1 -16l0 4l0 -12l1 1l0 -1l1 8l0 6l1 11l0 -32l0 26l1 -11l0 -10l1 13l0 -7l1 -6l0 9l0 -11l1 1l0 2l1 4l0 17l1 -11l0 -16l0 14l1 6l0 -12l1 21l0 -19l1 6l0 -3l0 -12l1 3l0 11l1 11l0 -29l1 19l0 6l0 1l1 -13l0 2l1 -12l0 12l1 -4l0 8l0 -17l1 19l0 -3l1 -10l0 19l1 -28l0 20l0 13l1 -18l0 1l1 -4l0 1l1 -32l0 15l0 7l1 14l0 17l1 -5l0 1l1 -10l0 -9l0 0l1 14l0 7l1 -30l0 18l1 0l0 -18l0 23l1 -4l0 13l1 -22l0 -3l1 23l0 -10l0 -12l1 6l0 8l1 -1l0 -3l1 5l0 9l0 -15l1 0l0 -9l1 19l0 -6l1 1l0 -10l0 2l1 -2l0 1l1 -6l0 11l1 -5l0 18l0 -10l1 -9l0 4l1 1l0 -2l1 11l0 -12l0 -10l1 7l0 6l1 4l0 -16l1 6l0 -8l0 7l1 14l0 -15l1 7l0 0l1 -6l0 -9l0 23l1 -7l0 3l1 0l0 -12l1 11l0 21l0 -11l1 -15l0 17l1 8l0 -27l1 -8l0 14l0 -5l1 8l0 3l1 -21l0 10l1 26l0 -29l0 16l1 -7l0 0l1 -11l0 8l1 -7l0 2l0 7l1 0l0 -6l1 17l0 -4l1 -2l0 -3l0 -9l1 -2l0 8l1 -6l0 8l1 2l0 -10l0 15l1 -17l0 0l1 15l0 -14l1 4l0 11l0 -10l1 6l0 -17l1 21l0 -14l1 15l0 -4l0 12l1 -25l0 25l1 -24l0 -2l1 -15l0 13l0 27l1 -15l0 -6l1 13l0 -1l1 -11l0 11l0 -13l1 20l0 3l1 -22l0 -1l1 13l0 -23l0 8l1 -2l0 9l1 -1l0 -11l1 8l0 15l0 -24l1 34l0 -28l1 -1l0 3l1 17l0 -22l0 2l1 3l0 18l1 -30l0 22l1 -6l0 8l0 -14l1 1l0 -8l1 21l0 -5l1 11l0 -17l0 37l1 -29l0 27l1 -21l0 -8l1 8l0 -3l0 -15l1 17l0 4l1 -21l0 10l1 10l0 16l0 -26l1 -2l0 2l1 -11l0 18l1 8l0 -13l0 8l1 -22l0 17l1 2l0 -6l1 16l0 -13l0 3l1 -8l0 1l1 -4l0 -9l1 -1l0 26l0 -1l1 -17l0 -1l1 7l0 -6l1 13l0 -6l0 7l1 -10l0 10l1 -13l0 -2l1 -9l0 6l0 18l1 -4l0 7l1 -11l0 0l1 0l0 3l0 -7l1 -1l0 20l1 -16l0 4l1 -11l0 9l0 -6l1 20l0 -20l1 11l0 -18l1 6l0 0l0 11l1 -6l0 -1l1 -13l0 27l0 -8l1 -17l0 -6l1 5l0 6l1 0l0 11l0 -7l1 -3l0 -5l1 3l0 -6l1 12l0 24l0 -13l1 -17l0 18l1 -10l0 1l1 1l0 0l0 2l1 -16l0 11l1 -14l0 16l1 6l0 -10l0 12l1 -12l0 2l1 -3l0 -6l1 22l0 -12l0 5l1 4l0 2l1 -9l0 -5l1 -2l0 -11l0 -1l1 32l0 -21l1 3l0 -3l1 5l0 0l0 -3l1 12l0 -12l1 -2l0 10l1 13l0 5l0 -16l1 0l0 -20l1 8l0 1l1 -2l0 8l0 15l1 -13l0 3l1 -10l0 26l1 -24l0 11l0 -6l1 -5l0 -3l1 2l0 -16l1 -87l0 35l0 69l1 -2l0 5l1 -1l0 8l1 28l0 -37l0 -1l1 15l0 -7l1 -8l0 -7l1 5l0 7l0 1l1 -6l0 12l1 7l0 -1l1 -24l0 -1l0 2l1 21l0 -11l1 1l0 20l1 -14l0 6l0 -18l1 -4l0 1l1 22l0 -2l1 4l0 -14l0 20l1 -20l0 19l1 -35l0 7l1 -5l0 19l0 -13l1 3l0 0l1 10l0 2l1 -1l0 -24l0 22l1 15l0 -4l1 -18l0 -12l1 -2l0 4l0 5l1 -2l0 2l1 -1l0 28l1 -20l0 15l0 -14l1 -9l0 19l1 -2l0 -20l1 14l0 -15l0 -5l1 2l0 3l1 -11l0 42l1 -21l0 -8l0 27l1 -16l0 -11l1 14l0 -11l1 0l0 21l0 0l1 -22l0 14l1 2l0 -19l1 25l0 -6l0 -1l1 -11l0 4l1 -12l0 12l1 2l0 -3l0 -3l1 -2l0 5l1 -14l0 6l1 -3l0 6l0 1l1 2l0 27l1 -23l0 -2l1 -7l0 10l0 14l1 -26l0 15l1 -2l0 -10l1 13l0 -27l0 28l1 -10l0 16l1 -9l0 -13l1 2l0 11l0 -1l1 -13l0 -12l1 11l0 17l1 -4l0 -10l0 9l1 -2l0 1l1 -13l0 7l1 22l0 -38l0 32l1 -25l0 10l1 -2l0 -7l1 11l0 -8l0 16l1 -1l0 -5l1 -3l0 23l1 -36l0 16l0 10l1 -27l0 18l1 -3l0 -3l1 19l0 -20l0 4l1 -10l0 3l1 10l0 14l1 -17l0 -12l0 12l1 9l0 -1l1 5l0 -20l1 -7l0 10l0 9l1 -7l0 10l1 -7l0 -9l1 -1l0 26l0 -20l1 4l0 -6l1 20l0 -6l1 -2l0 15l0 -26l1 19l0 -18l1 -2l0 12l1 -15l0 -3l0 16l1 7l0 -5l1 -9l0 10l1 2l0 -14l0 1l1 3l0 -5l1 2l0 0l1 13l0 3l0 -23l1 23l0 -10l1 -10l0 11l1 -7l0 13l0 -12l1 1l0 4l1 -12l0 13l1 -2l0 -11l0 13l1 12l0 8l1 -31l0 25l1 -10l0 -4l0 -13l1 -9l0 15l1 -4l0 8l0 -4l1 -9l0 10l1 8l0 -16l1 24l0 -21l0 10l1 -9l0 20l1 3l0 -13l1 -20l0 11l0 2l1 11l0 -15l1 2l0 6l1 2l0 -7l0 12l1 2l0 -24l1 8l0 2l1 0l0 -4l0 -2l1 8l0 0l1 5l0 2l1 4l0 -6l0 3l1 -14l0 16l1 -5l0 -7l1 2l0 7l0 -15l1 5l0 -4l1 0l0 12l1 -7l0 2l0 -5l1 3l0 -3l1 0l0 -7l1 21l0 -19l0 13l1 0l0 4l1 -23l0 16l1 2l0 21l0 -14l1 -18l0 3l1 4l0 -2l1 -3l0 8l0 -13l1 16l0 -2l1 6l0 -8l1 1l0 -8l0 1l1 11l0 -6l1 7l0 -22l1 -66l0 27l0 52l1 -22l0 5l1 30l0 -1l1 -9l0 7l0 -9l1 -9l0 6l1 9l0 -14l1 15l0 -13l0 37l1 -42l0 4l1 1l0 -11l1 17l0 8l0 -24l1 17l0 -9l1 -7l0 3l1 3l0 -18l0 12l1 7l0 2l1 -21l0 9l1 13l0 -15l0 1l1 8l0 16l1 -12l0 3l1 -1l0 17l0 -14l1 4l0 -12l1 15l0 -11l1 0l0 4l0 16l1 -6l0 -15l1 37l0 -27l1 -1l0 -3l0 6l1 6l0 26l1 -25l0 2l1 -8l0 -13l0 -1l1 26l0 -5l1 -19l0 11l1 18l0 -28l0 18l1 -18l0 31l1 -22l0 -15l1 21l0 -11l0 10l1 -17l0 1l1 6l0 -7l1 4l0 -3l0 32l1 -26l0 -7l1 9l0 21l1 -7l0 -14l0 5l1 0l0 5l1 -6l0 -1l1 -5l0 9l0 9l1 -13l0 12l1 -8l0 -1l1 16l0 -15" fill="none" stroke="#ff0000" stroke-width="1" shape-rendering="crispEdges"/>
</svg>
<rect x="926" y="134" width="484" height="36" fill="#000" />
<rect x="920" y="128" width="487" height="39" fill="#000" />
<rect x="921" y="129" width="485" height="37" fill="#fff" />
<rect x="938" y="138" width="86" height="1" fill="#ff0000" />
<rect x="938" y="156" width="86" height="1" fill="#0000ff" />
<rect x="46" y="85" width="181" height="22" fill="#000" />
<rect x="48" y="82" width="178" height="24" fill="#000" />
<rect x="49" y="83" width="176" height="22" fill="#fff" />
<rect x="50" y="84" width="174" height="20" fill="#f2f2f2" />
<rect x="181" y="806" width="17" height="1" fill="#000" />
<rect x="1420" y="806" width="17" height="1" fill="#000" />
<rect x="181" y="795" width="17" height="1" fill="#000" />
<rect x="1420" y="795" width="17" height="1" fill="#000" />
<rect x="181" y="787" width="17" height="1" fill="#000" />
<rect x="1420" y="787" width="17" height="1" fill="#000" />
<rect x="181" y="781" width="17" height="1" fill="#000" />
<rect x="1420" y="781" width="17" height="1" fill="#000" />
<rect x="181" y="775" width="17" height="1" fill="#000" />
<rect x="1420" y="775" width="17" height="1" fill="#000" />
<rect x="181" y="771" width="17" height="1" fill="#000" />
<rect x="1420" y="771" width="17" height="1" fill="#000" />
<rect x="181" y="766" width="17" height="1" fill="#000" />
<rect x="1420" y="766" width="17" height="1" fill="#000" />
<rect x="181" y="763" width="33" height="1" fill="#000" />
<rect x="1404" y="763" width="33" height="1" fill="#000" />
<rect x="181" y="738" width="17" height="1" fill="#000" />
<rect x="1420" y="738" width="17" height="1" fill="#000" />
<rect x="181" y="723" width="17" height="1" fill="#000" />
<rect x="1420" y="723" width="17" height="1" fill="#000" />
<rect x="181" y="713" width="17" height="1" fill="#000" />
<rect x="1420" y="713" width="17" height="1" fill="#000" />
<rect x="181" y="705" width="17" height="1" fill="#000" />
<rect x="1420" y="705" width="17" height="1" fill="#000" />
<rect x="181" y="698" width="17" height="1" fill="#000" />
<rect x="1420" y="698" width="17" height="1" fill="#000" />
<rect x="181" y="693" width="17" height="1" fill="#000" />
<rect x="1420" y="693" width="17" height="1" fill="#000" />
<rect x="181" y="688" width="17" height="1" fill="#000" />
<rect x="1420" y="688" width="17" height="1" fill="#000" />
<rect x="181" y="684" width="17" height="1" fill="#000" />
<rect x="1420" y="684" width="17" height="1" fill="#000" />
<rect x="181" y="680" width="33" height="1" fill="#000" />
<rect x="1404" y="680" width="33" height="1" fill="#000" />
<rect x="181" y="655" width="17" height="1" fill="#000" />
<rect x="1420" y="655" width="17" height="1" fill="#000" />
<rect x="181" y="640" width="17" height="1" fill="#000" />
<rect x="1420" y="640" width="17" height="1" fill="#000" />
<rect x="181" y="630" width="17" height="1" fill="#000" />
<rect x="1420" y="630" width="17" height="1" fill="#000" />
<rect x="181" y="622" width="17" height="1" fill="#000" />
<rect x="1420" y="622" width="17" height="1" fill="#000" />
<rect x="181" y="616" width="17" height="1" fill="#000" />
<rect x="1420" y="616" width="17" height="1" fill="#000" />
<rect x="181" y="610" width="17" height="1" fill="#000" />
<rect x="1420" y="610" width="17" height="1" fill="#000" />
<rect x="181" y="605" width="17" height="1" fill="#000" />
<rect x="1420" y="605" width="17" height="1" fill="#000" />
<rect x="181" y="601" width="17" height="1" fill="#000" />
<rect x="1420" y="601" width="17" height="1" fill="#000" />
<rect x="181" y="597" width="33" height="1" fill="#000" />
<rect x="1404" y="597" width="33" height="1" fill="#000" />
<rect x="181" y="572" width="17" height="1" fill="#000" />
<rect x="1420" y="572" width="17" height="1" fill="#000" />
<rect x="181" y="558" width="17" height="1" fill="#000" />
<rect x="1420" y="558" width="17" height="1" fill="#000" />
<rect x="181" y="547" width="17" height="1" fill="#000" />
<rect x="1420" y="547" width="17" height="1" fill="#000" />
<rect x="181" y="539" width="17" height="1" fill="#000" />
<rect x="1420" y="539" width="17" height="1" fill="#000" />
<rect x="181" y="533" width="17" height="1" fill="#000" />
<rect x="1420" y="533" width="17" height="1" fill="#000" />
<g shape-rendering="crispEdges" stroke-width="1" fill="none"><path d="M182 806.5H1436" stroke="#000" stroke-dasharray="1 2"/><path d="M182 795.5H1436" stroke="#000" stroke-dasharray="1 2"/><path d="M182 787.5H1436" stroke="#000" stroke-dasharray="1 2"/><path d="M182 781.5H1436" stroke="#000" stroke-dasharray="1 2"/><path d="M182 775.5H1436" stroke="#000" stroke-dasharray="1 2"/><path d="M182 771.5H1436" stroke="#000" stroke-dasharray="1 2"/><path d="M182 766.5H1436" stroke="#000" stroke-dasharray="1 2"/><path d="M182 763.5H1436" stroke="#000" stroke-dasharray="1 2"/><path d="M182 738.5H1436" stroke="#000" stroke-dasharray="1 2"/><path d="M182 723.5H1436" stroke="#000" stroke-dasharray="1 2"/><path d="M182 713.5H1436" stroke="#000" stroke-dasharray="1 2"/><path d="M182 705.5H1436" stroke="#000" stroke-dasharray="1 2"/><path d="M182 698.5H1436" stroke="#000" stroke-dasharray="1 2"/><path d="M182 693.5H1436" stroke="#000" stroke-dasharray="1 2"/><path d="M182 688.5H1436" stroke="#000" stroke-dasharray="1 2"/><path d="M182 684.5H1436" stroke="#000" stroke-dasharray="1 2"/><path d="M182 680.5H1436" stroke="#000" stroke-dasharray="1 2"/><path d="M182 655.5H1436" stroke="#000" stroke-dasharray="1 2"/><path d="M182 640.5H1436" stroke="#000" stroke-dasharray="1 2"/><path d="M182 630.5H1436" stroke="#000" stroke-dasharray="1 2"/><path d="M182 622.5H1436" stroke="#000" stroke-dasharray="1 2"/><path d="M182 616.5H1436" stroke="#000" stroke-dasharray="1 2"/><path d="M182 610.5H1436" stroke="#000" stroke-dasharray="1 2"/><path d="M182 605.5H1436" stroke="#000" stroke-dasharray="1 2"/><path d="M182 601.5H1436" stroke="#000" stroke-dasharray="1 2"/><path d="M182 597.5H1436" stroke="#000" stroke-dasharray="1 2"/><path d="M182 572.5H1436" stroke="#000" stroke-dasharray="1 2"/><path d="M182 558.5H1436" stroke="#000" stroke-dasharray="1 2"/><path d="M182 547.5H1436" stroke="#000" stroke-dasharray="1 2"/><path d="M182 539.5H1436" stroke="#000" stroke-dasharray="1 2"/><path d="M182 533.5H1436" stroke="#000" stroke-dasharray="1 2"/><path d="M409.5 531V818" stroke="#000" stroke-dasharray="1 2"/><path d="M637.5 531V818" stroke="#000" stroke-dasharray="1 2"/><path d="M866.5 531V818" stroke="#000" stroke-dasharray="1 2"/><path d="M1094.5 531V818" stroke="#000" stroke-dasharray="1 2"/><path d="M1322.5 531V818" stroke="#000" stroke-dasharray="1 2"/></g>
<rect x="226" y="813" width="1" height="5" fill="#000" />
<rect x="226" y="531" width="1" height="5" fill="#000" />
<rect x="272" y="813" width="1" height="5" fill="#000" />
<rect x="272" y="531" width="1" height="5" fill="#000" />
<rect x="318" y="813" width="1" height="5" fill="#000" />
<rect x="318" y="531" width="1" height="5" fill="#000" />
<rect x="363" y="813" width="1" height="5" fill="#000" />
<rect x="363" y="531" width="1" height="5" fill="#000" />
<rect x="409" y="808" width="1" height="10" fill="#000" />
<rect x="409" y="531" width="1" height="10" fill="#000" />
<rect x="455" y="813" width="1" height="5" fill="#000" />
<rect x="455" y="531" width="1" height="5" fill="#000" />
<rect x="500" y="813" width="1" height="5" fill="#000" />
<rect x="500" y="531" width="1" height="5" fill="#000" />
<rect x="546" y="813" width="1" height="5" fill="#000" />
<rect x="546" y="531" width="1" height="5" fill="#000" />
<rect x="592" y="813" width="1" height="5" fill="#000" />
<rect x="592" y="531" width="1" height="5" fill="#000" />
<rect x="637" y="808" width="1" height="10" fill="#000" />
<rect x="637" y="531" width="1" height="10" fill="#000" />
<rect x="683" y="813" width="1" height="5" fill="#000" />
<rect x="683" y="531" width="1" height="5" fill="#000" />
<rect x="729" y="813" width="1" height="5" fill="#000" />
<rect x="729" y="531" width="1" height="5" fill="#000" />
<rect x="774" y="813" width="1" height="5" fill="#000" />
<rect x="774" y="531" width="1" height="5" fill="#000" />
<rect x="820" y="813" width="1" height="5" fill="#000" />
<rect x="820" y="531" width="1" height="5" fill="#000" />
<rect x="866" y="808" width="1" height="10" fill="#000" />
<rect x="866" y="531" width="1" height="10" fill="#000" />
<rect x="911" y="813" width="1" height="5" fill="#000" />
<rect x="911" y="531" width="1" height="5" fill="#000" />
<rect x="957" y="813" width="1" height="5" fill="#000" />
<rect x="957" y="531" width="1" height="5" fill="#000" />
<rect x="1003" y="813" width="1" height="5" fill="#000" />
<rect x="1003" y="531" width="1" height="5" fill="#000" />
<rect x="1048" y="813" width="1" height="5" fill="#000" />
<rect x="1048" y="531" width="1" height="5" fill="#000" />
<rect x="1094" y="808" width="1" height="10" fill="#000" />
<rect x="1094" y="531" width="1" height="10" fill="#000" />
<rect x="1140" y="813" width="1" height="5" fill="#000" />
<rect x="1140" y="531" width="1" height="5" fill="#000" />
<rect x="1185" y="813" width="1" height="5" fill="#000" />
<rect x="1185" y="531" width="1" height="5" fill="#000" />
<rect x="1231" y="813" width="1" height="5" fill="#000" />
<rect x="1231" y="531" width="1" height="5" fill="#000" />
<rect x="1277" y="813" width="1" height="5" fill="#000" />
<rect x="1277" y="531" width="1" height="5" fill="#000" />
<rect x="1322" y="808" width="1" height="10" fill="#000" />
<rect x="1322" y="531" width="1" height="10" fill="#000" />
<rect x="1368" y="813" width="1" height="5" fill="#000" />
<rect x="1368" y="531" width="1" height="5" fill="#000" />
<rect x="1414" y="813" width="1" height="5" fill="#000" />
<rect x="1414" y="531" width="1" height="5" fill="#000" />
<rect x="181" y="530" width="1256" height="1" fill="#000" />
<rect x="181" y="818" width="1256" height="1" fill="#000" />
<rect x="181" y="530" width="1" height="289" fill="#000" />
<rect x="1436" y="530" width="1" height="289" fill="#000" />
<svg x="182" y="531" width="1254" height="287" viewBox="182 531 1254 287" overflow="hidden">
<path d="M181.5 687.5l0 8l1 -8l0 5l1 9l0 13l1 -8l0 10l0 6l1 5l0 12l1 4l0 2l1 13l0 13l0 2l1 11l0 -2l1 3l0 -12l1 14l0 0l0 -4l1 22l0 -14l1 7l0 -11l1 -7l0 7l0 -6l1 9l0 23l1 -27l0 17l1 -13l0 14l0 -8l1 6l0 -11l1 7l0 -1l1 2l0 1l0 -10l1 -1l0 18l1 -7l0 4l1 -6l0 16l0 -11l1 -14l0 7l1 2l0 -3l1 6l0 -10l0 6l1 6l0 -19l1 6l0 16l1 -9l0 12l0 -5l1 -6l0 8l1 -10l0 2l1 0l0 -8l0 7l1 6l0 -23l1 12l0 -3l1 8l0 -10l0 -3l1 5l0 11l1 -5l0 0l1 9l0 -20l0 13l1 4l0 -5l1 5l0 -10l1 -2l0 12l0 -11l1 13l0 -14l1 8l0 2l1 2l0 -5l0 -5l1 2l0 0l1 -4l0 11l1 0l0 -6l0 -4l1 15l0 -8l1 1l0 -1l1 3l0 -6l0 -6l1 2l0 10l1 -4l0 7l1 -4l0 -1l0 1l1 7l0 -16l1 -6l0 29l1 -31l0 12l0 2l1 3l0 -3l1 2l0 5l1 -2l0 -2l0 -2l1 -4l0 -5l1 7l0 -4l1 3l0 6l0 0l1 -3l0 -1l1 12l0 6l1 -16l0 -1l0 -3l1 1l0 5l1 -6l0 -1l1 -6l0 1l0 15l1 -10l0 0l1 -2l0 10l1 -9l0 6l0 10l1 -12l0 -2l1 6l0 -8l1 14l0 -9l0 3l1 -1l0 -7l1 -8l0 3l1 15l0 -11l0 1l1 6l0 -4l1 2l0 -1l1 14l0 -21l0 15l1 -9l0 -5l1 19l0 -16l1 2l0 -5l0 3l1 -11l0 14l1 -6l0 -4l1 15l0 -14l0 14l1 -5l0 6l1 -7l0 -3l1 7l0 1l0 -1l1 13l0 -17l1 6l0 -7l1 -3l0 -3l0 2l1 7l0 0l1 -6l0 10l1 -7l0 -4l0 -2l1 12l0 -6l1 -5l0 10l1 -9l0 16l0 -16l1 1l0 1l1 -1l0 -6l1 13l0 -2l0 -4l1 7l0 -8l1 6l0 -3l1 1l0 10l0 -15l1 -1l0 -4l1 1l0 -6l1 6l0 -1l0 -7l1 7l0 5l1 2l0 -3l1 8l0 3l0 -13l1 13l0 -15l1 1l0 5l1 -12l0 7l0 1l1 -8l0 9l1 3l0 -10l0 -4l1 19l0 -22l1 7l0 5l1 -4l0 2l0 -1l1 10l0 -10l1 0l0 1l1 7l0 -3l0 -11l1 10l0 1l1 -4l0 2l1 -4l0 15l0 -24l1 5l0 -6l1 17l0 -12l1 4l0 -4l0 7l1 3l0 0l1 -12l0 1l1 10l0 -3l0 7l1 -14l0 7l1 2l0 -2l1 -8l0 2l0 0l1 5l0 13l1 -3l0 -7l1 -8l0 14l0 -16l1 -61l0 -14l1 5l0 34l1 41l0 -8l0 6l1 4l0 9l1 5l0 -11l1 10l0 -20l0 -5l1 6l0 5l1 4l0 -7l1 0l0 -3l0 -6l1 3l0 10l1 -10l0 19l1 -18l0 9l0 -3l1 1l0 15l1 -8l0 -16l1 4l0 8l0 12l1 -13l0 8l1 -16l0 0l1 6l0 -2l0 1l1 -7l0 -3l1 14l0 -18l1 13l0 -17l0 20l1 -9l0 5l1 3l0 -12l1 11l0 5l0 -16l1 12l0 8l1 -6l0 -3l1 -14l0 17l0 -4l1 2l0 -9l1 13l0 -10l1 3l0 -2l0 1l1 0l0 -4l1 23l0 -15l1 1l0 -2l0 -1l1 -5l0 0l1 5l0 12l1 -17l0 7l0 -9l1 -2l0 19l1 -6l0 -19l1 14l0 -11l0 -1l1 1l0 22l1 -16l0 28l1 -20l0 1l0 -1l1 -12l0 4l1 3l0 -1l1 -9l0 4l0 -3l1 9l0 6l1 -10l0 7l1 2l0 -6l0 9l1 -9l0 2l1 1l0 -8l1 18l0 -14l0 4l1 -9l0 11l1 -6l0 -2l1 4l0 -5l0 1l1 0l0 1l1 -4l0 13l1 -13l0 4l0 5l1 -18l0 10l1 3l0 -1l1 6l0 1l0 1l1 -3l0 5l1 -5l0 0l1 -4l0 0l0 -8l1 15l0 5l1 -6l0 -2l1 -1l0 -11l0 13l1 3l0 5l1 -11l0 5l1 -3l0 3l0 -5l1 0l0 -4l1 6l0 -7l1 2l0 -4l0 7l1 6l0 3l1 2l0 -8l1 -12l0 7l0 -1l1 9l0 -7l1 12l0 -16l1 -4l0 -3l0 7l1 3l0 -9l1 -6l0 24l1 -22l0 5l0 5l1 -1l0 -4l1 4l0 11l1 -17l0 6l0 -5l1 11l0 -7l1 -9l0 10l1 -2l0 12l0 -18l1 2l0 4l1 7l0 0l1 1l0 2l0 -10l1 -3l0 17l1 -6l0 7l1 -10l0 -7l0 1l1 2l0 2l1 2l0 8l1 -4l0 11l0 -11l1 -16l0 9l1 7l0 2l1 -23l0 7l0 4l1 2l0 0l1 -3l0 -4l1 10l0 6l0 -3l1 -3l0 11l1 -18l0 3l1 7l0 -6l0 1l1 -8l0 4l1 0l0 1l1 -9l0 9l0 -11l1 12l0 -2l1 -4l0 9l1 -1l0 -8l0 1l1 14l0 -4l1 -7l0 -6l1 8l0 10l0 -18l1 5l0 -4l1 7l0 -2l0 -17l1 27l0 -10l1 4l0 -2l1 5l0 -15l0 4l1 6l0 6l1 -18l0 13l1 -13l0 14l0 -5l1 11l0 0l1 -7l0 -6l1 -1l0 -1l0 11l1 -4l0 1l1 -1l0 11l1 -13l0 -5l0 2l1 15l0 -16l1 0l0 9l1 8l0 -14l0 -3l1 -4l0 -1l1 6l0 5l1 -10l0 4l0 -1l1 -4l0 16l1 -17l0 10l1 4l0 -8l0 5l1 -5l0 3l1 -7l0 -7l1 12l0 -6l0 8l1 -1l0 -4l1 -10l0 23l1 -11l0 1l0 7l1 1l0 -8l1 -11l0 8l1 13l0 -11l0 4l1 -17l0 28l1 -18l0 19l1 -16l0 -11l0 5l1 1l0 8l1 -8l0 13l1 -7l0 11l0 -15l1 28l0 -20l1 -11l0 1l1 17l0 -11l0 2l1 -4l0 -4l1 8l0 -7l1 0l0 -3l0 6l1 -7l0 2l1 2l0 -1l1 7l0 -19l0 15l1 1l0 -1l1 2l0 -4l1 -6l0 10l0 15l1 -14l0 -4l1 3l0 -2l1 -14l0 10l0 0l1 2l0 3l1 1l0 -4l1 7l0 -8l0 4l1 -3l0 -14l1 2l0 17l1 -7l0 -3l0 -1l1 5l0 -8l1 7l0 2l1 -8l0 7l0 0l1 -12l0 16l1 -9l0 9l1 -6l0 -6l0 1l1 -1l0 23l1 -13l0 -10l1 0l0 4l0 -3l1 15l0 -2l1 -16l0 5l1 2l0 -4l0 -4l1 12l0 -2l1 3l0 0l1 0l0 2l0 0l1 -11l0 -4l1 17l0 -14l1 0l0 13l0 -2l1 -20l0 11l1 -2l0 8l1 2l0 -6l0 7l1 -13l0 6l1 -9l0 8l1 9l0 -6l0 0l1 -1l0 -5l1 10l0 -10l1 5l0 2l0 2l1 -9l0 2l1 2l0 0l1 12l0 -16l0 11l1 -18l0 19l1 -8l0 -5l1 -1l0 6l0 5l1 -5l0 5l1 -13l0 0l1 1l0 -5l0 0l1 7l0 -3l1 5l0 -9l1 8l0 10l0 -22l1 11l0 -1l1 0l0 -9l1 21l0 -16l0 7l1 10l0 -13l1 5l0 3l1 -13l0 0l0 10l1 4l0 11l1 -2l0 -19l1 3l0 4l0 -15l1 10l0 -6l1 -2l0 8l1 -2l0 -3l0 12l1 -12l0 4l1 -3l0 -3l1 17l0 -20l0 3l1 -9l0 17l1 -7l0 13l1 -7l0 1l0 3l1 -9l0 5l1 -5l0 5l1 -12l0 4l0 -7l1 -56l0 24l1 31l0 4l1 11l0 4l0 -12l1 10l0 5l1 -8l0 -9l1 7l0 -2l0 9l1 1l0 1l1 -5l0 -5l1 0l0 -4l0 -2l1 0l0 4l1 -3l0 2l1 16l0 -22l0 3l1 22l0 -15l1 -10l0 4l1 7l0 -2l0 -4l1 12l0 -17l1 2l0 9l0 -10l1 -5l0 9l1 2l0 0l1 -9l0 2l0 -4l1 11l0 7l1 -5l0 3l1 -1l0 -9l0 -1l1 1l0 21l1 -16l0 3l1 -5l0 7l0 -7l1 3l0 -5l1 8l0 1l1 -11l0 -4l0 5l1 10l0 -9l1 -6l0 17l1 -14l0 9l0 9l1 -17l0 14l1 -11l0 5l1 -6l0 14l0 -1l1 -11l0 11l1 -8l0 -5l1 -8l0 9l0 10l1 -14l0 11l1 -4l0 3l1 -3l0 8l0 -15l1 8l0 12l1 -15l0 9l1 -14l0 -4l0 -3l1 11l0 0l1 -6l0 -7l1 -1l0 13l0 -1l1 -2l0 14l1 -10l0 -11l1 -2l0 11l0 -3l1 15l0 -8l1 -4l0 0l1 -2l0 8l0 -2l1 -12l0 3l1 13l0 0l1 -10l0 4l0 -7l1 10l0 -1l1 -1l0 3l1 1l0 -8l0 -11l1 7l0 3l1 2l0 1l1 -4l0 10l0 -14l1 13l0 -3l1 4l0 -4l1 -3l0 -3l0 3l1 -4l0 14l1 -16l0 10l1 -3l0 -2l0 18l1 -6l0 -9l1 -8l0 4l1 0l0 -8l0 5l1 -6l0 8l1 2l0 -3l1 12l0 -10l0 -4l1 2l0 10l1 -11l0 4l1 -4l0 3l0 -4l1 17l0 -20l1 2l0 -1l1 30l0 -31l0 11l1 0l0 -20l1 4l0 24l1 -14l0 -2l0 -1l1 9l0 -5l1 -6l0 5l1 1l0 4l0 -10l1 3l0 -7l1 21l0 4l1 -19l0 -2l0 15l1 -4l0 3l1 -1l0 3l1 -18l0 5l0 6l1 -2l0 20l1 -25l0 12l1 -23l0 20l0 -14l1 10l0 -5l1 4l0 1l1 -9l0 9l0 -8l1 18l0 -18l1 -2l0 13l1 -15l0 5l0 -13l1 6l0 9l1 16l0 -15l1 3l0 1l0 10l1 -11l0 11l1 -19l0 14l1 4l0 -9l0 -1l1 0l0 -3l1 5l0 -1l1 -12l0 7l0 -12l1 25l0 -9l1 2l0 -7l1 3l0 -3l0 8l1 -22l0 8l1 15l0 -7l1 0l0 7l0 -13l1 19l0 -8l1 0l0 -13l1 15l0 -16l0 12l1 -11l0 11l1 -9l0 -7l1 3l0 4l0 2l1 15l0 -1l1 0l0 -15l1 -1l0 11l0 -4l1 -4l0 3l1 -2l0 2l1 4l0 -3l0 7l1 -12l0 -1l1 -2l0 25l1 -24l0 2l0 -7l1 9l0 -6l1 9l0 -1l1 -7l0 -2l0 0l1 11l0 -6l1 -2l0 19l1 -15l0 0l0 3l1 -4l0 2l1 -2l0 14l1 -6l0 -12l0 -3l1 6l0 -4l1 -2l0 5l1 -5l0 -2l0 13l1 6l0 1l1 -4l0 -1l1 -3l0 -3l0 3l1 -9l0 8l1 -3l0 -4l1 8l0 -7l0 6l1 3l0 7l1 1l0 -16l0 14l1 -9l0 -9l1 14l0 -22l1 5l0 14l0 -9l1 16l0 -13l1 0l0 -5l1 15l0 -12l0 1l1 2l0 6l1 -11l0 8l1 -3l0 -6l0 -2l1 11l0 1l1 1l0 -10l1 3l0 13l0 -17l1 12l0 2l1 -2l0 2l1 -10l0 -2l0 9l1 -6l0 5l1 -16l0 3l1 -2l0 13l0 0l1 13l0 -21l1 4l0 -8l1 24l0 -21l0 16l1 0l0 -9l1 3l0 -2l1 -16l0 13l0 -3l1 7l0 3l1 6l0 -8l1 -10l0 9l0 3l1 14l0 -19l1 -4l0 -23l1 -69l0 25l0 74l1 0l0 -1l1 0l0 -9l1 4l0 10l0 -13l1 -5l0 16l1 -2l0 -9l1 -5l0 24l0 -10l1 -16l0 6l1 12l0 -9l1 5l0 -13l0 8l1 7l0 -8l1 14l0 -8l1 -6l0 5l0 -7l1 13l0 -7l1 2l0 4l1 -3l0 -5l0 -3l1 8l0 -4l1 -9l0 11l1 1l0 -7l0 11l1 -15l0 3l1 11l0 -4l1 14l0 -15l0 -10l1 2l0 16l1 -6l0 3l1 3l0 -17l0 3l1 6l0 -4l1 5l0 -2l1 -17l0 20l0 -11l1 5l0 -10l1 17l0 -11l1 -3l0 3l0 4l1 -5l0 16l1 -14l0 1l1 13l0 1l0 -15l1 11l0 -6l1 2l0 4l1 -17l0 8l0 -7l1 7l0 4l1 -3l0 6l1 -8l0 -1l0 -5l1 2l0 13l1 -1l0 -10l1 2l0 -4l0 5l1 -5l0 9l1 -4l0 1l1 -8l0 17l0 -10l1 -6l0 26l1 -10l0 -2l1 -6l0 -1l0 6l1 -4l0 1l1 -7l0 15l1 -9l0 7l0 -2l1 -4l0 0l1 -11l0 26l1 -19l0 5l0 -12l1 8l0 -6l1 3l0 0l1 4l0 -6l0 13l1 -10l0 10l1 -11l0 9l1 -14l0 11l0 4l1 -17l0 14l1 -16l0 1l1 14l0 6l0 2l1 3l0 -18l1 -4l0 13l1 -8l0 4l0 -7l1 15l0 -10l1 15l0 -21l1 10l0 3l0 8l1 -7l0 -4l1 -11l0 4l1 13l0 -6l0 -7l1 14l0 -12l1 8l0 -3l1 -10l0 11l0 -1l1 -3l0 -1l1 2l0 4l1 -1l0 -9l0 5l1 14l0 -11l1 -5l0 1l1 -1l0 10l0 -14l1 4l0 3l1 -4l0 -1l1 11l0 -8l0 8l1 -10l0 6l1 -12l0 18l1 -12l0 13l0 -13l1 3l0 -1l1 -1l0 17l1 5l0 -24l0 0l1 -3l0 0l1 5l0 0l1 2l0 0l0 -1l1 -2l0 11l1 -16l0 19l1 -2l0 -13l0 7l1 -6l0 6l1 -8l0 15l1 -3l0 -3l0 -12l1 6l0 -5l1 4l0 9l1 -1l0 -16l0 5l1 11l0 5l1 -17l0 29l1 -19l0 -7l0 14l1 -16l0 -2l1 4l0 8l0 -8l1 17l0 -20l1 1l0 10l1 -1l0 12l0 -11l1 5l0 -9l1 6l0 -5l1 6l0 -6l0 2l1 0l0 2l1 0l0 5l1 -2l0 -4l0 -1l1 -7l0 2l1 5l0 2l1 0l0 -6l0 2l1 11l0 2l1 -8l0 -10l1 1l0 2l0 0l1 -1l0 1l1 3l0 0l1 5l0 8l0 -9l1 -10l0 4l1 0l0 -1l1 -12l0 16l0 4l1 -5l0 -2l1 12l0 -8l1 5l0 -11l0 6l1 4l0 -1l1 18l0 -21l1 10l0 3l0 -20l1 -2l0 -4l1 8l0 6l1 -4l0 16l0 -12l1 2l0 2l1 5l0 -11l1 3l0 -1l0 -9l1 15l0 -6l1 7l0 -7l1 -2l0 -2l0 4l1 13l0 -8l1 2l0 -6l1 14l0 -13l0 4l1 -4l0 -1l1 -10l0 15l1 -9l0 13l0 -4l1 0l0 13l1 -15l0 -5l1 1l0 -4l0 7l1 10l0 -12l1 5l0 5l1 3l0 -24l0 5l1 11l0 9l1 -14l0 4l1 -4l0 2l0 4l1 -3l0 4l1 -3l0 8l1 -4l0 -9l0 6l1 4l0 -9l1 -5l0 12l1 3l0 -4l0 -16l1 3l0 20l1 -8l0 -2l1 -10l0 20l0 -6l1 -6l0 2l1 -2l0 -6l1 3l0 13l0 0l1 -8l0 -1l1 10l0 -16l1 14l0 -4l0 1l1 -4l0 -2l1 7l0 3l1 -7l0 -5l0 5l1 3l0 -10l1 -2l0 12l1 -3l0 11l0 -14l1 -7l0 2l1 17l0 -14l1 1l0 5l0 -5l1 1l0 2l1 0l0 11l1 2l0 -4l0 -4l1 -5l0 4l1 -9l0 15l1 -4l0 7l0 -10l1 6l0 9l1 -18l0 5l1 2l0 6l0 -5l1 0l0 -2l1 -2l0 8l1 -15l0 9l0 -6l1 6l0 0l1 0l0 -11l1 10l0 -8l0 9l1 -8l0 1l1 -2l0 0l1 -1l0 5l0 3l1 -1l0 7l1 -6l0 6l1 -2l0 -8l0 24l1 -34l0 15l1 -3l0 0l1 8l0 -8l0 2l1 -1l0 4l1 -10l0 11l1 -6l0 2l0 -4l1 10l0 -13l1 12l0 10l1 -23l0 6l0 12l1 -9l0 -6l1 24l0 -16l1 -8l0 -3l0 2l1 4l0 12l1 2l0 -10l1 10l0 -10l0 -1l1 -8l0 5l1 8l0 -12l1 -2l0 3l0 12l1 -3l0 4l1 -8l0 3l1 -2l0 -3l0 -4l1 19l0 -21l1 13l0 8l1 -4l0 2l0 -10l1 -11l0 1l1 1l0 14l1 -1l0 -2l0 -9l1 16l0 -2l1 2l0 -10l1 7l0 -6l0 2l1 0l0 -3l1 -3l0 6l1 1l0 0l0 -16l1 10l0 -1l1 12l0 -9l1 -10l0 8l0 8l1 -4l0 -6l1 10l0 -2l0 -7l1 7l0 13l1 -20l0 0l1 17l0 -19l0 7l1 4l0 -1l1 -5l0 18l1 -6l0 -5l0 0l1 -6l0 2l1 -4l0 7l1 -4l0 -14l0 1l1 22l0 0l1 -11l0 7l1 5l0 -12l0 -6l1 4l0 4l1 -2l0 5l1 -10l0 5l0 0l1 15l0 3l1 -9l0 -9l1 13l0 -12l0 1l1 -6l0 8l1 9l0 -19l1 29l0 -14l0 -3l1 -7l0 1l1 11l0 -12l1 6l0 8l0 -6l1 -1l0 7l1 -9l0 14l1 -20l0 15l0 -6l1 8l0 1l1 -8l0 3l1 -10l0 4l0 7l1 6l0 -12l1 -1l0 -9l1 -53l0 25l0 41l1 -4l0 7l1 -9l0 22l1 -19l0 -2l0 -1l1 9l0 -6l1 -8l0 9l1 -3l0 10l0 -5l1 1l0 -2l1 1l0 -8l1 -1l0 2l0 -3l1 10l0 -1l1 13l0 -21l1 5l0 11l0 -12l1 18l0 -21l1 -2l0 2l1 8l0 13l0 -8l1 -7l0 -7l1 4l0 4l1 8l0 -9l0 11l1 -12l0 4l1 -7l0 -2l1 21l0 -3l0 -5l1 -7l0 -2l1 3l0 -1l1 -6l0 0l0 1l1 -4l0 12l1 -12l0 11l1 11l0 0l0 -16l1 11l0 -4l1 -5l0 1l1 10l0 4l0 -3l1 -21l0 11l1 2l0 8l1 -6l0 -1l0 -8l1 13l0 0l1 -6l0 -1l1 -5l0 8l0 -13l1 17l0 1l1 -13l0 0l1 9l0 -3l0 -6l1 9l0 4l1 -2l0 -18l1 17l0 -2l0 -9l1 10l0 -15l1 12l0 -7l1 -1l0 1l0 8l1 -6l0 5l1 -7l0 10l1 2l0 2l0 -12l1 7l0 -4l1 13l0 -21l1 6l0 2l0 -8l1 11l0 -12l1 13l0 -9l1 2l0 -3l0 4l1 2l0 24l1 -18l0 -12l1 5l0 19l0 -15l1 3l0 -13l1 6l0 -2l1 -8l0 6l0 12l1 -4l0 1l1 -3l0 6l1 -12l0 8l0 2l1 2l0 -12l1 -2l0 -2l1 16l0 -21l0 6l1 8l0 11l1 0l0 -7l1 -1l0 -8l0 10l1 1l0 -8l1 -2l0 5l1 -1l0 -6l0 17l1 -17l0 20l1 -18l0 1l1 12l0 -13l0 18l1 -12l0 12l1 5l0 -23l1 14l0 2l0 -4l1 -4l0 9l1 -15l0 1l1 1l0 4l0 1l1 -1l0 -1l1 3l0 -17l1 10l0 13l0 -9l1 7l0 -5l1 -4l0 17l1 -14l0 -3l0 20l1 -14l0 7l1 -13l0 -2l1 -6l0 8l0 7l1 -1l0 -5l1 16l0 -24l1 2l0 12l0 -3l1 6l0 -17l1 22l0 -11l1 2l0 9l0 -9l1 8l0 -8l1 -11l0 -1l1 12l0 -5l0 -2l1 1l0 7l1 -1l0 -7l1 13l0 1l0 -24l1 13l0 9l1 -9l0 -7l0 4l1 18l0 -20l1 9l0 -6l1 12l0 -20l0 8l1 -4l0 17l1 -17l0 -7l1 19l0 -6l0 5l1 1l0 -15l1 12l0 6l1 -6l0 -10l0 8l1 -7l0 4l1 8l0 -9l1 15l0 -12l0 5l1 11l0 -7l1 -9l0 -13l1 16l0 4l0 5l1 -1l0 -2l1 -9l0 10l1 -5l0 0l0 -15l1 33l0 -12l1 -12l0 12l1 -11l0 -14l0 12l1 3l0 -5l1 9l0 -9l1 4l0 5l0 -7l1 1l0 7l1 1l0 -4l1 -13l0 13l0 -13l1 18l0 4l1 7l0 -18l1 10l0 -15l0 -2l1 10l0 -4l1 6l0 -5l1 -6l0 6l0 -11l1 19l0 -10l1 23l0 -20l1 -8l0 23l0 -3l1 -24l0 5l1 5l0 -5l1 6l0 0l0 1l1 0l0 12l1 -1l0 -19l1 7l0 -2l0 4l1 -1l0 -2l1 6l0 6l1 0l0 7l0 -5l1 -16l0 10l1 3l0 -7l1 -5l0 -7l0 14l1 -1l0 0l1 7l0 -7l1 -4l0 8l0 -11l1 2l0 2l1 8l0 -9l1 14l0 -11l0 7l1 -7l0 15l1 -18l0 -1l1 -4l0 6l0 -4l1 10l0 -2l1 11l0 -10l1 -4l0 -3l0 3l1 9l0 -13l1 2l0 -3l1 -6l0 16l0 -11l1 10l0 -8l1 6l0 2l1 -1l0 3l0 -9l1 6l0 11l1 -16l0 1l1 6l0 -8l0 11l1 -25l0 16l1 2l0 7l1 -14l0 22l0 -23l1 6l0 4l1 -10l0 5l1 0l0 11l0 -7l1 -2l0 11l1 -17l0 0l1 -1l0 8l0 1l1 4l0 -2l1 -15l0 5l1 1l0 6l0 -7l1 22l0 -7l1 -23l0 16l1 13l0 -8l0 -17l1 5l0 9l1 -8l0 -3l1 9l0 16l0 -10l1 -10l0 1l1 -6l0 1l1 9l0 -10l0 11l1 -9l0 -2l1 9l0 6l1 -1l0 -10l0 -3l1 -4l0 14l1 -5l0 3l1 -5l0 -2l0 11l1 -4l0 -3l1 7l0 -1l1 7l0 -7l0 5l1 -9l0 5l1 -1l0 1l1 -11l0 6l0 -3l1 -2l0 3l1 4l0 -8l1 16l0 -17l0 16l1 3l0 -19l1 9l0 -8l1 9l0 -1l0 14l1 -13l0 10l1 -15l0 0l1 10l0 -8l0 -6l1 13l0 -6l1 2l0 -20l1 15l0 4l0 -6l1 10l0 -14l1 14l0 -1l1 -14l0 5l0 -3l1 4l0 -3l1 8l0 0l1 -1l0 9l0 -18l1 13l0 7l1 -11l0 3l1 6l0 -10l0 -16l1 10l0 -2l1 8l0 -3l1 -5l0 21l0 -18l1 4l0 -4l1 9l0 2l1 -3l0 -3l0 8l1 -14l0 12l1 1l0 -15l1 5l0 9l0 -8l1 28l0 -9l1 -21l0 4l0 1l1 -6l0 -2l1 9l0 17l1 -21l0 -3l0 8l1 0l0 -2l1 6l0 3l1 -3l0 -3l0 4l1 -4l0 4l1 -8l0 -4l1 18l0 -13l0 7l1 -1l0 -1l1 1l0 8l1 -6l0 -4l0 -1l1 -3l0 -3l1 17l0 -8l1 -2l0 -5l0 -13l1 19l0 -9l1 3l0 2l1 6l0 -5l0 1l1 -8l0 4l1 5l0 -7l1 2l0 18l0 -22l1 -9l0 14l1 -3l0 14l1 -8l0 -10l0 12l1 -9l0 7l1 6l0 -13l1 8l0 -7l0 14l1 -17l0 20l1 -7l0 -14l1 4l0 -7l0 7l1 3l0 2l1 -1l0 1l1 9l0 -15l0 -6l1 10l0 4l1 9l0 -16l1 10l0 -1l0 -10l1 -7l0 11l1 -4l0 0l1 9l0 0l0 -2l1 -3l0 12l1 -9l0 -12l1 9l0 -4l0 0l1 -6l0 -2l1 3l0 -5l1 -16l0 -21l0 12l1 13l0 -2l1 11l0 17l1 -1l0 6l0 -9l1 5l0 -5l1 3l0 -2l1 24l0 -22l0 9l1 5l0 -16l1 7l0 8l1 -18l0 23l0 -17l1 -1l0 13l1 -8l0 5l1 -2l0 1l0 11l1 -25l0 20l1 0l0 -4l1 -9l0 5l0 -3l1 0l0 11l1 -7l0 -8l1 6l0 12l0 -5l1 2l0 -9l1 4l0 -10l1 6l0 -2l0 2l1 10l0 -15l1 13l0 -8l1 0l0 0l0 3l1 -8l0 -3l1 11l0 7l1 -9l0 2l0 -9l1 2l0 7l1 -3l0 0l1 3l0 -1l0 7l1 -13l0 7l1 -6l0 16l1 -18l0 12l0 -4l1 -16l0 14l1 5l0 -7l1 -1l0 1" fill="none" stroke="#0000ff" stroke-width="1" shape-rendering="crispEdges"/>
<path d="M181.5 681.5l0 -2l1 -7l0 27l1 5l0 0l1 -6l0 23l0 16l1 6l0 18l1 -1l0 21l1 3l0 -5l0 -6l1 12l0 -9l1 11l0 0l1 2l0 -8l0 4l1 -9l0 17l1 -3l0 -5l1 6l0 4l0 -6l1 11l0 -10l1 -3l0 -5l1 11l0 2l0 -1l1 -10l0 2l1 2l0 -4l1 -6l0 9l0 -9l1 18l0 -19l1 21l0 -8l1 -4l0 15l0 -13l1 8l0 -1l1 0l0 5l1 -11l0 1l0 3l1 0l0 -12l1 5l0 18l1 -2l0 -19l0 17l1 -5l0 -3l1 -6l0 0l1 2l0 4l0 -1l1 -9l0 -5l1 4l0 13l1 -8l0 -7l0 14l1 2l0 -2l1 -6l0 -2l1 3l0 2l0 -2l1 2l0 5l1 0l0 -2l1 -5l0 9l0 -5l1 -1l0 -8l1 14l0 -11l1 12l0 -10l0 9l1 -4l0 -4l1 -5l0 -2l1 7l0 -9l0 9l1 6l0 -2l1 -1l0 -7l1 10l0 4l0 -7l1 -11l0 15l1 -7l0 -1l1 -4l0 9l0 -6l1 -3l0 8l1 6l0 -6l1 2l0 -2l0 -4l1 0l0 -3l1 7l0 -3l1 2l0 -5l0 -4l1 9l0 -9l1 2l0 0l1 4l0 -3l0 1l1 10l0 -2l1 -11l0 15l1 -18l0 -5l0 4l1 11l0 -1l1 -6l0 0l1 9l0 -4l0 4l1 6l0 -16l1 5l0 14l1 -5l0 -1l0 -11l1 2l0 7l1 -15l0 16l1 -5l0 1l0 -8l1 0l0 -3l1 -3l0 12l1 -6l0 9l0 2l1 -8l0 6l1 4l0 -12l1 -1l0 5l0 -2l1 8l0 -3l1 7l0 -8l1 -2l0 -11l0 4l1 10l0 -12l1 5l0 1l1 4l0 4l0 -6l1 -1l0 -4l1 -3l0 7l1 -1l0 8l0 -1l1 -13l0 6l1 9l0 1l1 -7l0 4l0 -1l1 -12l0 11l1 4l0 -15l1 -3l0 4l0 1l1 -4l0 5l1 0l0 8l1 -9l0 21l0 -19l1 6l0 -2l1 -6l0 1l1 12l0 -24l0 10l1 -2l0 -1l1 0l0 0l1 -6l0 13l0 -2l1 10l0 -21l1 19l0 -2l1 -8l0 -2l0 -1l1 -2l0 12l1 2l0 -8l1 -5l0 10l0 -14l1 7l0 9l1 -13l0 2l1 2l0 -1l0 -13l1 13l0 -7l1 8l0 14l0 -18l1 -12l0 4l1 8l0 -12l1 6l0 2l0 2l1 -9l0 9l1 1l0 -8l1 9l0 -23l0 14l1 5l0 5l1 5l0 -17l1 1l0 -7l0 12l1 -9l0 4l1 13l0 -8l1 -11l0 8l0 -11l1 2l0 2l1 3l0 -7l1 14l0 -9l0 1l1 -5l0 5l1 -4l0 -11l1 18l0 4l0 -21l1 24l0 -24l1 16l0 -8l1 2l0 2l0 3l1 2l0 0l1 -3l0 -41l1 -81l0 27l0 91l1 7l0 10l1 -11l0 -11l1 -3l0 21l0 -13l1 19l0 -20l1 -2l0 2l1 -2l0 -1l0 6l1 10l0 0l1 -11l0 6l1 -6l0 21l0 -26l1 9l0 2l1 10l0 -14l1 -2l0 -11l0 20l1 -4l0 -10l1 11l0 -15l1 13l0 3l0 -1l1 -5l0 0l1 0l0 4l1 -5l0 7l0 -8l1 1l0 11l1 -15l0 3l1 -1l0 2l0 -5l1 9l0 3l1 -9l0 2l1 9l0 0l0 -4l1 -5l0 2l1 -14l0 20l1 -13l0 12l0 -15l1 -2l0 7l1 -1l0 -2l1 11l0 -11l0 4l1 -1l0 -3l1 3l0 9l1 -5l0 -16l0 20l1 -11l0 11l1 -8l0 -7l1 7l0 19l0 -11l1 -10l0 6l1 -8l0 9l1 -4l0 -8l0 11l1 6l0 -3l1 -11l0 17l1 -2l0 -10l0 0l1 -1l0 10l1 -10l0 -1l1 3l0 9l0 -10l1 0l0 6l1 -14l0 9l1 -5l0 3l0 2l1 5l0 3l1 -15l0 9l1 8l0 -19l0 7l1 -1l0 -1l1 3l0 4l1 0l0 -4l0 2l1 -7l0 9l1 -9l0 7l1 3l0 1l0 -1l1 -2l0 -6l1 7l0 -8l1 5l0 7l0 -5l1 0l0 -6l1 5l0 -8l1 10l0 -10l0 6l1 -9l0 15l1 -7l0 -6l1 10l0 -3l0 -1l1 1l0 1l1 -13l0 18l1 -18l0 5l0 0l1 -5l0 17l1 -5l0 27l1 -32l0 6l0 -14l1 3l0 9l1 6l0 -18l1 8l0 3l0 10l1 -11l0 8l1 -6l0 -3l1 13l0 -7l0 -10l1 -4l0 0l1 0l0 10l1 2l0 -12l0 10l1 -6l0 -5l1 9l0 -8l1 11l0 -12l0 8l1 -7l0 4l1 -1l0 13l1 2l0 -6l0 -1l1 -6l0 4l1 -4l0 10l1 -11l0 -1l0 3l1 0l0 7l1 -12l0 19l1 -18l0 -2l0 5l1 1l0 5l1 -8l0 -1l1 4l0 -8l0 3l1 8l0 -1l1 1l0 -6l1 6l0 1l0 -15l1 29l0 -33l1 10l0 8l1 0l0 -8l0 -4l1 -6l0 14l1 10l0 -10l1 3l0 -5l0 2l1 -1l0 11l1 4l0 -2l1 -20l0 5l0 -4l1 9l0 -1l1 1l0 -1l1 -15l0 13l0 -4l1 3l0 -5l1 3l0 -11l0 16l1 -2l0 -5l1 0l0 8l1 -12l0 6l0 2l1 3l0 -10l1 9l0 -1l1 5l0 -20l0 20l1 -13l0 12l1 4l0 -12l1 6l0 11l0 -19l1 4l0 6l1 -3l0 -7l1 -4l0 6l0 0l1 4l0 -3l1 -2l0 7l1 -6l0 0l0 -4l1 12l0 -15l1 2l0 16l1 -23l0 12l0 4l1 -6l0 -6l1 8l0 2l1 -9l0 6l0 -7l1 -2l0 6l1 5l0 -28l1 -69l0 24l0 77l1 -9l0 -5l1 14l0 -5l1 6l0 -3l0 16l1 -14l0 -10l1 5l0 4l1 -3l0 -8l0 1l1 8l0 -12l1 8l0 -6l1 4l0 3l0 -2l1 2l0 3l1 -1l0 4l1 -5l0 -8l0 1l1 14l0 -17l1 10l0 3l1 5l0 -10l0 -3l1 -9l0 7l1 -7l0 10l1 5l0 -1l0 1l1 -2l0 -12l1 19l0 0l1 -15l0 7l0 1l1 7l0 -18l1 23l0 -19l1 2l0 4l0 -1l1 0l0 8l1 -16l0 7l1 -4l0 -4l0 11l1 -3l0 -4l1 0l0 2l1 11l0 -14l0 -9l1 8l0 9l1 -5l0 -1l1 -8l0 4l0 0l1 -1l0 -3l1 12l0 -7l1 6l0 -12l0 13l1 -5l0 1l1 0l0 -4l1 -10l0 12l0 2l1 7l0 -13l1 8l0 -11l1 3l0 5l0 0l1 5l0 -5l1 -6l0 2l1 1l0 0l0 -4l1 5l0 6l1 -5l0 -2l1 -8l0 0l0 13l1 -3l0 -1l1 -4l0 1l1 4l0 -7l0 5l1 -1l0 1l1 -9l0 11l1 4l0 -13l0 9l1 -9l0 10l1 -8l0 4l1 -14l0 8l0 4l1 7l0 -13l1 8l0 -3l1 7l0 -1l0 -9l1 0l0 4l1 0l0 4l1 -7l0 -3l0 16l1 -6l0 -2l1 0l0 -15l1 10l0 0l0 18l1 -14l0 -4l1 16l0 -2l1 -12l0 11l0 -5l1 7l0 -11l1 2l0 -11l1 13l0 -12l0 12l1 -10l0 10l1 8l0 -4l1 -11l0 -2l0 -3l1 5l0 -3l1 -5l0 17l1 -12l0 7l0 -14l1 16l0 -16l1 -27l0 15l1 24l0 -8l0 34l1 -24l0 -16l1 13l0 -5l1 10l0 -3l0 10l1 -15l0 7l1 3l0 -19l1 6l0 8l0 -9l1 19l0 -11l1 -1l0 7l1 -10l0 2l0 -6l1 2l0 7l1 0l0 -1l1 -15l0 14l0 -17l1 -72l0 23l1 57l0 4l1 6l0 -1l0 4l1 -16l0 9l1 6l0 -16l1 3l0 6l0 2l1 -10l0 0l1 6l0 15l1 -15l0 1l0 2l1 -7l0 8l1 7l0 -3l1 -3l0 -11l0 8l1 1l0 0l1 -5l0 7l1 -8l0 5l0 14l1 -8l0 0l1 -17l0 8l0 1l1 -8l0 16l1 -8l0 0l1 -6l0 0l0 -2l1 5l0 -5l1 -3l0 9l1 10l0 -15l0 17l1 0l0 -5l1 -8l0 -4l1 2l0 3l0 -7l1 10l0 -14l1 10l0 -1l1 5l0 4l0 5l1 -20l0 7l1 0l0 -3l1 3l0 3l0 -14l1 15l0 11l1 -6l0 -4l1 3l0 -6l0 3l1 1l0 -7l1 -10l0 19l1 -9l0 -3l0 -1l1 3l0 -1l1 -3l0 0l1 -5l0 2l0 11l1 -3l0 3l1 -10l0 -74l1 -86l0 28l0 137l1 -1l0 -5l1 -3l0 8l1 -2l0 2l0 -5l1 -2l0 8l1 -1l0 -10l1 5l0 4l0 -6l1 0l0 10l1 -11l0 10l1 -1l0 -12l0 -6l1 16l0 -1l1 -13l0 17l1 -11l0 8l0 -20l1 11l0 1l1 -9l0 7l1 5l0 2l0 -8l1 4l0 -6l1 13l0 -5l1 -4l0 4l0 0l1 -5l0 8l1 -2l0 0l1 -17l0 0l0 5l1 -3l0 14l1 -7l0 0l1 1l0 -1l0 8l1 -2l0 -5l1 17l0 -16l1 0l0 -6l0 5l1 -4l0 11l1 -12l0 11l1 -17l0 10l0 11l1 -2l0 -16l1 5l0 3l1 4l0 3l0 2l1 -13l0 15l1 -16l0 12l1 2l0 -6l0 8l1 -9l0 -17l1 18l0 1l1 -5l0 -4l0 -8l1 7l0 4l1 1l0 -8l1 5l0 3l0 3l1 -6l0 4l1 4l0 -6l1 -5l0 8l0 -14l1 7l0 12l1 -12l0 0l1 11l0 -6l0 -2l1 -9l0 4l1 10l0 -12l1 -5l0 11l0 -6l1 5l0 -7l1 -8l0 16l1 -12l0 14l0 3l1 -10l0 3l1 -17l0 24l1 -14l0 7l0 -2l1 4l0 -4l1 -12l0 3l1 3l0 7l0 6l1 -3l0 -4l1 -7l0 0l1 -2l0 -1l0 13l1 -2l0 -8l1 5l0 -3l1 1l0 -5l0 -1l1 -2l0 -2l1 7l0 -3l1 3l0 -1l0 -5l1 4l0 1l1 -5l0 9l1 -4l0 0l0 -3l1 1l0 -4l1 5l0 5l1 -3l0 -10l0 7l1 -2l0 5l1 -5l0 5l1 -2l0 -1l0 -9l1 25l0 -21l1 7l0 -2l1 -7l0 0l0 1l1 1l0 0l1 4l0 2l1 -3l0 -10l0 11l1 -3l0 0l1 2l0 -6l1 -7l0 1l0 13l1 -17l0 15l1 -6l0 1l1 -4l0 4l0 -17l1 17l0 -8l1 -8l0 12l1 5l0 -5l0 0l1 -1l0 -2l1 5l0 -12l1 1l0 16l0 -5l1 -7l0 0l1 0l0 -9l1 3l0 11l0 -7l1 2l0 -1l1 -1l0 -3l1 0l0 5l0 -8l1 5l0 -1l1 -7l0 6l1 1l0 -5l0 4l1 4l0 -10l1 11l0 -18l0 6l1 -9l0 3l1 8l0 -8l1 8l0 -1l0 0l1 0l0 2l1 -8l0 1l1 -6l0 8l0 -7l1 -2l0 0l1 -1l0 2l1 0l0 -2l0 -3l1 5l0 1l1 1l0 -12l1 6l0 1l0 -6l1 5l0 2l1 -17l0 14l1 -1l0 -5l0 8l1 -4l0 -2l1 1l0 -4l1 -1l0 7l0 -15l1 3l0 -1l1 3l0 5l1 -7l0 1l0 -4l1 2l0 1l1 -5l0 11l1 -5l0 -8l0 9l1 1l0 -11l1 6l0 -5l1 4l0 -12l0 10l1 -4l0 3l1 -4l0 -32l1 -60l0 12l0 77l1 -4l0 6l1 0l0 -3l1 -3l0 6l0 1l1 -3l0 1l1 -6l0 3l1 3l0 -7l0 4l1 5l0 -4l1 0l0 1l1 0l0 -1l0 -2l1 10l0 -5l1 1l0 -3l1 -3l0 17l0 -4l1 -3l0 2l1 -6l0 7l1 11l0 -4l0 -11l1 3l0 6l1 -5l0 2l1 4l0 -7l0 5l1 -3l0 7l1 3l0 -6l1 7l0 0l0 3l1 -8l0 9l1 -3l0 -4l1 1l0 15l0 -11l1 -4l0 13l1 -5l0 -4l1 3l0 -8l0 7l1 9l0 -13l1 10l0 3l1 -3l0 1l0 -6l1 9l0 -9l1 9l0 -7l1 -2l0 14l0 -9l1 8l0 -5l1 3l0 3l1 -8l0 10l0 -2l1 5l0 -1l1 -6l0 9l1 -3l0 4l0 -10l1 13l0 -5l1 4l0 -7l1 8l0 -7l0 3l1 -3l0 2l1 2l0 -5l1 8l0 -2l0 6l1 -10l0 12l1 -8l0 -2l1 10l0 -9l0 -4l1 17l0 -5l1 -5l0 12l1 -11l0 2l0 -8l1 5l0 10l1 -10l0 10l1 -9l0 7l0 -8l1 9l0 1l1 7l0 -1l1 -14l0 3l0 7l1 -7l0 7l1 3l0 -4l1 -4l0 -3l0 5l1 2l0 1l1 -5l0 6l1 0l0 4l0 -3l1 1l0 3l1 -4l0 3l1 -1l0 -14l0 14l1 9l0 -16l1 6l0 10l1 -5l0 -9l0 7l1 -5l0 -4l1 6l0 4l1 -1l0 -7l0 -3l1 5l0 7l1 -8l0 11l1 -6l0 -4l0 6l1 4l0 -6l1 2l0 -6l1 6l0 5l0 0l1 6l0 -6l1 4l0 1l1 -14l0 -6l0 15l1 -9l0 0l1 4l0 10l1 -9l0 3l0 -5l1 3l0 -8l1 11l0 6l1 -3l0 1l0 10l1 -12l0 -5l1 -3l0 1l1 12l0 -14l0 9l1 -8l0 16l1 -7l0 0l1 7l0 -15l0 4l1 2l0 -10l1 4l0 0l1 9l0 3l0 15l1 -28l0 2l1 8l0 3l1 3l0 -17l0 19l1 -14l0 18l1 -10l0 -2l1 5l0 -2l0 -4l1 0l0 2l1 -2l0 8l1 -3l0 5l0 -9l1 -10l0 27l1 -13l0 4l0 -3l1 12l0 -19l1 22l0 -17l1 -5l0 1l0 1l1 15l0 -18l1 6l0 1l1 1l0 -5l0 -1l1 6l0 -4l1 1l0 4l1 11l0 -20l0 2l1 -4l0 28l1 -17l0 13l1 -23l0 -1l0 9l1 6l0 -6l1 10l0 -2l1 -10l0 -5l0 19l1 3l0 -13l1 4l0 -6l1 9l0 -18l0 18l1 -9l0 5l1 -2l0 -2l1 -3l0 -7l0 19l1 -19l0 9l1 -4l0 4l1 2l0 0l0 -1l1 12l0 -15l1 4l0 15l1 -14l0 7l0 -15l1 16l0 -9l1 14l0 -80l1 -84l0 28l0 125l1 -8l0 12l1 13l0 -8l1 -4l0 14l0 -6l1 -18l0 10l1 -5l0 10l1 -12l0 -4l0 9l1 -5l0 12l1 -11l0 -8l1 1l0 13l0 0l1 -2l0 2l1 -8l0 4l1 -2l0 9l0 3l1 -22l0 23l1 -13l0 5l1 1l0 1l0 1l1 -1l0 8l1 -11l0 -11l1 10l0 -4l0 4l1 0l0 -1l1 7l0 -7l1 2l0 2l0 -6l1 0l0 4l1 -8l0 8l1 -2l0 15l0 -5l1 -7l0 3l1 -3l0 7l1 6l0 -4l0 -2l1 -3l0 -2l1 13l0 -18l1 8l0 5l0 -9l1 -6l0 14l1 -7l0 2l1 6l0 -7l0 -9l1 11l0 -7l1 4l0 -11l1 3l0 18l0 -10l1 4l0 -19l1 19l0 3l1 -10l0 -6l0 1l1 13l0 -3l1 -3l0 18l1 -11l0 -7l0 -1l1 6l0 -5l1 17l0 -12l1 -5l0 9l0 0l1 1l0 -7l1 -6l0 16l1 -13l0 8l0 -7l1 1l0 15l1 -18l0 10l1 -6l0 5l0 -1l1 1l0 0l1 -2l0 0l1 -11l0 13l0 2l1 -12l0 5l1 5l0 6l1 -17l0 2l0 4l1 6l0 -2l1 8l0 -2l1 4l0 0l0 4l1 -16l0 -4l1 12l0 1l1 -5l0 -11l0 12l1 -2l0 -12l1 17l0 -7l1 4l0 -3l0 3l1 1l0 8l1 1l0 -19l1 8l0 8l0 -12l1 6l0 -7l1 4l0 -5l1 1l0 -1l0 14l1 -7l0 -9l1 13l0 -3l1 1l0 -7l0 0l1 21l0 -7l1 -8l0 -2l1 15l0 -6l0 -7l1 6l0 -9l1 0l0 8l1 4l0 -4l0 -6l1 -8l0 17l1 -9l0 0l1 -3l0 3l0 -2l1 6l0 -4l1 5l0 -4l1 6l0 -12l0 -4l1 7l0 3l1 3l0 -3l1 8l0 -1l0 -5l1 10l0 1l1 -8l0 2l1 -5l0 3l0 -7l1 9l0 2l1 -5l0 -2l1 3l0 0l0 0l1 -5l0 10l1 -11l0 6l1 1l0 10l0 -2l1 -15l0 8l1 -12l0 -5l1 9l0 11l0 -1l1 4l0 5l1 -14l0 0l0 -2l1 12l0 -17l1 2l0 8l1 -5l0 -4l0 2l1 -7l0 16l1 -4l0 -4l1 -4l0 7l0 2l1 -1l0 2l1 8l0 -2l1 -8l0 -4l0 3l1 5l0 4l1 1l0 -7l1 9l0 -18l0 -5l1 15l0 -4l1 -2l0 2l1 -7l0 8l0 8l1 8l0 -18l1 -2l0 3l1 -6l0 10l0 -8l1 -3l0 5l1 -6l0 7l1 -6l0 6l0 11l1 -1l0 3l1 -14l0 11l1 -3l0 9l0 -19l1 10l0 5l1 -10l0 -12l1 34l0 -21l0 -5l1 13l0 -9l1 -9l0 4l1 10l0 -7l0 16l1 -7l0 -8l1 -1l0 -1l1 -23l0 13l0 12l1 -2l0 12l1 -7l0 2l1 1l0 -9l0 -2l1 -3l0 1l1 14l0 -6l1 1l0 -1l0 2l1 -1l0 -4l1 -5l0 13l1 5l0 -6l0 10l1 -8l0 -4l1 2l0 -5l1 5l0 -9l0 4l1 -8l0 -5l1 10l0 14l1 -1l0 5l0 -13l1 -10l0 22l1 0l0 -19l1 9l0 1l0 4l1 -2l0 -6l1 7l0 -5l1 -4l0 3l0 4l1 5l0 -20l1 11l0 2l1 -11l0 8l0 1l1 5l0 -5l1 5l0 -6l1 -3l0 12l0 -7l1 -3l0 7l1 2l0 -7l1 3l0 -1l0 2l1 4l0 -9l1 9l0 -7l1 -8l0 14l0 -10l1 11l0 -11l1 9l0 6l1 -18l0 11l0 -4l1 5l0 -6l1 -2l0 18l1 -6l0 -1l0 -8l1 9l0 -10l1 6l0 -8l1 5l0 3l0 10l1 0l0 -12l1 7l0 -15l1 9l0 0l0 4l1 -13l0 11l1 4l0 -7l1 4l0 -8l0 -6l1 5l0 15l1 5l0 -21l1 11l0 -5l0 -4l1 -5l0 5l1 0l0 0l1 4l0 7l0 -5l1 7l0 -9l1 -3l0 5l1 3l0 7l0 -9l1 3l0 -1l1 -11l0 7l1 -9l0 -3l0 4l1 4l0 -3l1 8l0 2l1 -9l0 5l0 -2l1 8l0 -8l1 -7l0 4l1 0l0 10l0 -15l1 -3l0 12l1 1l0 -8l1 3l0 15l0 -9l1 3l0 7l1 -15l0 3l1 -6l0 3l0 5l1 -6l0 -3l1 7l0 -8l1 5l0 23l0 -18l1 -3l0 -4l1 7l0 -2l1 -7l0 9l0 4l1 -21l0 13l1 -4l0 12l1 -8l0 -4l0 7l1 1l0 -1l1 1l0 -5l1 9l0 -4l0 0l1 -5l0 -1l1 2l0 9l1 -2l0 2l0 -8l1 12l0 -11l1 9l0 -19l1 14l0 -6l0 -1l1 -23l0 14l1 22l0 -1l1 -2l0 -4l0 5l1 -15l0 13l1 -11l0 3l1 2l0 -2l0 2l1 5l0 -6l1 7l0 -11l1 7l0 1l0 11l1 -19l0 1l1 0l0 4l1 -9l0 6l0 2l1 -7l0 11l1 17l0 -12l0 -8l1 -7l0 6l1 1l0 1l1 -10l0 8l0 -3l1 1l0 3l1 1l0 -4l1 13l0 -24l0 4l1 17l0 2l1 -14l0 -4l1 7l0 -4l0 -2l1 6l0 -6l1 21l0 -15l1 -4l0 5l0 15l1 -25l0 -2l1 10l0 6l1 7l0 -8l0 -14l1 -2l0 -2l1 14l0 -15l1 9l0 -3l0 12l1 -6l0 -1l1 -4l0 0l1 3l0 -1l0 12l1 -6l0 -8l1 -7l0 1l1 4l0 -11l0 19l1 4l0 -16l1 1l0 -2l1 9l0 -13l0 10l1 -11l0 14l1 6l0 -15l1 12l0 -9l0 1l1 -5l0 4l1 -2l0 -33l1 -61l0 25l0 66l1 0l0 -10l1 -1l0 11l1 0l0 4l0 10l1 -24l0 15l1 3l0 -15l1 6l0 -3l0 7l1 12l0 -10l1 5l0 11l1 -17l0 6l0 3l1 -8l0 -4l1 5l0 8l1 -8l0 -5l0 7l1 17l0 -10l1 -15l0 20l1 -15l0 8l0 8l1 5l0 -13l1 1l0 3l1 8l0 -9l0 6l1 -3l0 -1l1 -11l0 6l1 9l0 -9l0 5l1 -10l0 15l1 -1l0 -9l1 5l0 9l0 -5l1 -14l0 21l1 -5l0 -7l1 2l0 2l0 0l1 -7l0 7l1 -6l0 5l1 6l0 -9l0 18l1 -11l0 -2l1 4l0 7l1 -22l0 15l0 0l1 -17l0 13l1 0l0 5l1 -8l0 0l0 9l1 15l0 -17l1 -10l0 7l1 -3l0 -1l0 -5l1 20l0 -7l1 2l0 -6l1 3l0 4l0 18l1 -17l0 -1l1 -17l0 22l1 -9l0 2l0 -4l1 3l0 0l1 7l0 -9l1 3l0 1l0 -4l1 1l0 -3l1 -7l0 6l1 8l0 -8l0 -9l1 12l0 -2l1 -10l0 13l1 1l0 -1l0 7l1 -10l0 -5l1 3l0 8l1 1l0 -8l0 -7l1 6l0 11l1 -6l0 -3l1 -7l0 12l0 -12l1 8l0 3l1 -7l0 10l1 -16l0 8l0 -1l1 4l0 4l1 0l0 -5l1 -5l0 9l0 -8l1 -5l0 8l1 4l0 -5l1 6l0 -8l0 1l1 7l0 -13l1 8l0 8l1 9l0 -18l0 1l1 2l0 -5l1 10l0 14l1 -3l0 -16l0 5l1 15l0 -24l1 12l0 -4l1 5l0 -17l0 24l1 -23l0 9l1 -7l0 15l1 -7l0 -1l0 8l1 -9l0 3l1 1l0 -7l1 9l0 -17l0 9l1 4l0 -1l1 -2l0 -9l1 2l0 7l0 4l1 -8l0 7l1 -4l0 -6l1 20l0 -15l0 3l1 -4l0 -2l1 3l0 -1l1 9l0 -9l0 1l1 15l0 -9l1 10l0 -7l1 2l0 -10l0 -8l1 5l0 3l1 6l0 4l1 -16l0 -2l0 8l1 9l0 -16l1 6l0 3l0 4l1 -10l0 8l1 0l0 2l1 -3l0 -9l0 20l1 -22l0 11l1 -1l0 0l1 1l0 7l0 -13l1 6l0 3l1 -4l0 7l1 4l0 -17l0 19l1 -15l0 -2l1 0l0 -2l1 -3l0 10l0 4l1 -17l0 -4l1 11l0 8l1 -7l0 0l0 -8l1 4l0 15l1 -2l0 -9l1 -1l0 1l0 14l1 -11l0 0l1 -9l0 -6l1 9l0 -6l0 18l1 -13l0 2l1 -12l0 19l1 -6l0 -7l0 9l1 -2l0 2l1 2l0 -10l1 16l0 -10l0 -7l1 10l0 -7l1 2l0 0l1 2l0 -3l0 -8l1 25l0 -25l1 5l0 -6l1 9l0 -4l0 -3l1 4l0 -13l1 3l0 -21l1 -62l0 24l0 59l1 21l0 -13l1 -3l0 -3l1 -10l0 4l0 -4l1 -1l0 17l1 -7l0 -7l1 -2l0 4l0 -9l1 14l0 -6l1 10l0 -18l1 9l0 -13l0 3l1 4l0 -3l1 1l0 -2l1 0l0 3l0 11l1 -26l0 14l1 3l0 -8l1 2l0 -7l0 6l1 5l0 6l1 -15l0 11l1 -7l0 4l0 -7l1 0l0 9l1 4l0 0l1 2l0 4l0 -6l1 17l0 -19l1 3l0 12l1 -9l0 1l0 2l1 -6l0 4l1 2l0 13l1 -16l0 11l0 4l1 0l0 -11l1 8l0 -11l1 4l0 34l0 -25l1 -6l0 5l1 -6l0 8l1 10l0 -12l0 4l1 -6l0 2l1 -2l0 4l1 -2l0 2l0 -5l1 14l0 -11l1 24l0 -20l1 -2l0 8l0 -2l1 -8l0 12l1 -6l0 10l1 -9l0 1l0 12l1 -2l0 -11l1 8l0 -7l1 -2l0 -1" fill="none" stroke="#ff0000" stroke-width="1" shape-rendering="crispEdges"/>
</svg>
<rect x="909" y="544" width="501" height="36" fill="#000" />
<rect x="903" y="538" width="504" height="39" fill="#000" />
<rect x="904" y="539" width="502" height="37" fill="#fff" />
<rect x="922" y="548" width="89" height="1" fill="#ff0000" />
<rect x="922" y="566" width="89" height="1" fill="#0000ff" />
<rect x="46" y="495" width="181" height="22" fill="#000" />
<rect x="48" y="492" width="178" height="24" fill="#000" />
<rect x="49" y="493" width="176" height="22" fill="#fff" />
<rect x="50" y="494" width="174" height="20" fill="#f2f2f2" />
<g style="will-change:transform">
<text x="652" y="16.7" font-size="13.4" font-weight="bold" fill="#ffffff" text-anchor="start" textLength="159" lengthAdjust="spacingAndGlyphs" stroke="#fff" stroke-width="0.35">Diagnostics test tools</text>
<text x="6.3" y="40" font-size="13" font-weight="normal" fill="#000" text-anchor="start" textLength="20.0" lengthAdjust="spacingAndGlyphs" >File</text>
<text x="39.4" y="40" font-size="13" font-weight="normal" fill="#000" text-anchor="start" textLength="20.5" lengthAdjust="spacingAndGlyphs" >Edit</text>
<text x="72.2" y="40" font-size="13" font-weight="normal" fill="#000" text-anchor="start" textLength="74.8" lengthAdjust="spacingAndGlyphs" >Measurement</text>
<text x="159.2" y="40" font-size="13" font-weight="normal" fill="#000" text-anchor="start" textLength="21.0" lengthAdjust="spacingAndGlyphs" >Plot</text>
<text x="192.5" y="40" font-size="13" font-weight="normal" fill="#000" text-anchor="start" textLength="43.3" lengthAdjust="spacingAndGlyphs" >Window</text>
<text x="1491" y="40" font-size="13" font-weight="normal" fill="#000" text-anchor="start" textLength="25.6" lengthAdjust="spacingAndGlyphs" >Help</text>
<text x="36.1" y="68" font-size="13" font-weight="normal" fill="#000" text-anchor="start" textLength="26.9" lengthAdjust="spacingAndGlyphs" >Input</text>
<text x="99.4" y="68" font-size="13" font-weight="normal" fill="#000" text-anchor="start" textLength="74.6" lengthAdjust="spacingAndGlyphs" >Measurement</text>
<text x="198.6" y="67.7" font-size="13" font-weight="normal" fill="#000" text-anchor="start" textLength="52.8" lengthAdjust="spacingAndGlyphs" >Excitation</text>
<text x="298.7" y="65.8" font-size="13" font-weight="normal" fill="#000" text-anchor="start" textLength="33.3" lengthAdjust="spacingAndGlyphs" >Result</text>
<text x="84" y="915" font-size="12.7" font-weight="normal" fill="#000" text-anchor="middle" textLength="31.2" lengthAdjust="spacingAndGlyphs" >Reset</text>
<text x="234" y="915" font-size="12.7" font-weight="normal" fill="#000" text-anchor="middle" textLength="30.5" lengthAdjust="spacingAndGlyphs" >Zoom</text>
<text x="384" y="915" font-size="12.7" font-weight="normal" fill="#000" text-anchor="middle" textLength="32.5" lengthAdjust="spacingAndGlyphs" >Active</text>
<text x="534" y="915" font-size="12.7" font-weight="normal" fill="#000" text-anchor="middle" textLength="23.9" lengthAdjust="spacingAndGlyphs" >New</text>
<text x="684" y="915" font-size="12.7" font-weight="normal" fill="#000" text-anchor="middle" textLength="51.1" lengthAdjust="spacingAndGlyphs" >Options...</text>
<text x="834" y="915" font-size="12.7" font-weight="normal" fill="#000" text-anchor="middle" textLength="43.8" lengthAdjust="spacingAndGlyphs" >Import...</text>
<text x="984" y="915" font-size="12.7" font-weight="normal" fill="#000" text-anchor="middle" textLength="44.5" lengthAdjust="spacingAndGlyphs" >Export...</text>
<text x="1134" y="915" font-size="12.7" font-weight="normal" fill="#000" text-anchor="middle" textLength="65.0" lengthAdjust="spacingAndGlyphs" >Reference...</text>
<text x="1284" y="915" font-size="12.7" font-weight="normal" fill="#000" text-anchor="middle" textLength="67.0" lengthAdjust="spacingAndGlyphs" >Calibration...</text>
<text x="1434" y="915" font-size="12.7" font-weight="normal" fill="#000" text-anchor="middle" textLength="34.5" lengthAdjust="spacingAndGlyphs" >Print...</text>
<text x="195.5" y="955.6" font-size="15" font-weight="bold" fill="#000" text-anchor="middle" >Start</text>
<text x="575.5" y="956.6" font-size="15" font-weight="bold" fill="#ffffff" text-anchor="middle" >Pause</text>
<text x="574.5" y="955.6" font-size="15" font-weight="bold" fill="#868686" text-anchor="middle" >Pause</text>
<text x="955.5" y="956.6" font-size="15" font-weight="bold" fill="#ffffff" text-anchor="middle" >Resume</text>
<text x="954.5" y="955.6" font-size="15" font-weight="bold" fill="#868686" text-anchor="middle" >Resume</text>
<text x="1335.5" y="956.6" font-size="15" font-weight="bold" fill="#ffffff" text-anchor="middle" >Abort</text>
<text x="1334.5" y="955.6" font-size="15" font-weight="bold" fill="#868686" text-anchor="middle" >Abort</text>
<text x="6" y="982" font-size="11.6" font-weight="normal" fill="#000" text-anchor="start" textLength="199.1" lengthAdjust="spacingAndGlyphs" >Test done (Measurements 1 / Averages 10)</text>
<text x="1070" y="982" font-size="11.6" font-weight="normal" fill="#000" text-anchor="start" textLength="33.3" lengthAdjust="spacingAndGlyphs" >Repeat</text>
<text x="1222" y="982" font-size="11.6" font-weight="normal" fill="#000" text-anchor="start" textLength="57.4" lengthAdjust="spacingAndGlyphs" >Fourier tools</text>
<text x="1434" y="982" font-size="11.6" font-weight="normal" fill="#000" text-anchor="start" textLength="23.0" lengthAdjust="spacingAndGlyphs" >done</text>
<text x="1041.5" y="142.2" font-size="14.8" font-weight="bold" fill="#000" text-anchor="start" textLength="214.3" lengthAdjust="spacingAndGlyphs" >H1:PSL-PWR_NPRO_OUT_DQ</text>
<text x="1041.5" y="160.2" font-size="14.8" font-weight="bold" fill="#000" text-anchor="start" textLength="263.4" lengthAdjust="spacingAndGlyphs" >H1:PSL-PWR_NPRO_OUT_DQ(REF1)</text>
<text x="67" y="99.8" font-size="18.4" font-weight="bold" fill="#000" text-anchor="start" textLength="139.5" lengthAdjust="spacingAndGlyphs" >Power spectrum</text>
<text x="181.12" y="421.9" font-size="15.2" font-weight="bold" fill="#000" text-anchor="middle" >0</text>
<text x="409.45000000000005" y="421.9" font-size="15.2" font-weight="bold" fill="#000" text-anchor="middle" >100</text>
<text x="637.78" y="421.9" font-size="15.2" font-weight="bold" fill="#000" text-anchor="middle" >200</text>
<text x="866.11" y="421.9" font-size="15.2" font-weight="bold" fill="#000" text-anchor="middle" >300</text>
<text x="1094.44" y="421.9" font-size="15.2" font-weight="bold" fill="#000" text-anchor="middle" >400</text>
<text x="1322.77" y="421.9" font-size="15.2" font-weight="bold" fill="#000" text-anchor="middle" >500</text>
<text x="749.8" y="450.2" font-size="17" font-weight="bold" fill="#000" text-anchor="start" textLength="116.4" lengthAdjust="spacingAndGlyphs" >Frequency (Hz)</text>
<text x="63.5" y="476" font-size="15.4" font-weight="bold" fill="#ff0000" text-anchor="start" textLength="170.4" lengthAdjust="spacingAndGlyphs" >*T0=20/06/2018 21:38:03</text>
<text x="746.6" y="475.6" font-size="15.4" font-weight="bold" fill="#000" text-anchor="start" textLength="52.6" lengthAdjust="spacingAndGlyphs" >Avg=10</text>
<text x="1384" y="475.8" font-size="15.4" font-weight="bold" fill="#000" text-anchor="start" textLength="96.5" lengthAdjust="spacingAndGlyphs" >BW=0.187499</text>
<text transform="translate(85 263.2) rotate(-90)" font-size="17" font-weight="bold" text-anchor="middle" textLength="84" lengthAdjust="spacingAndGlyphs" fill="#000">Magnitude</text>
<text x="160.2" y="232.1" font-size="15.2" font-weight="bold" text-anchor="end" fill="#000">10</text>
<text x="160.2" y="225.9" font-size="9.8" font-weight="bold" text-anchor="start" fill="#000">-4</text>
<text x="160.2" y="344.7" font-size="15.2" font-weight="bold" text-anchor="end" fill="#000">10</text>
<text x="160.2" y="338.5" font-size="9.8" font-weight="bold" text-anchor="start" fill="#000">-5</text>
<text x="1029.7" y="552.2" font-size="14.8" font-weight="bold" fill="#000" text-anchor="start" textLength="217.6" lengthAdjust="spacingAndGlyphs" >H1:PSL-FSS_FAST_MON_OUT</text>
<text x="1029.7" y="570.2" font-size="14.8" font-weight="bold" fill="#000" text-anchor="start" textLength="265" lengthAdjust="spacingAndGlyphs" >H1:PSL-FSS_FAST_MON_OUT(REF0)</text>
<text x="67" y="509.8" font-size="18.4" font-weight="bold" fill="#000" text-anchor="start" textLength="139.5" lengthAdjust="spacingAndGlyphs" >Power spectrum</text>
<text x="181.12" y="831.9" font-size="15.2" font-weight="bold" fill="#000" text-anchor="middle" >0</text>
<text x="409.45000000000005" y="831.9" font-size="15.2" font-weight="bold" fill="#000" text-anchor="middle" >100</text>
<text x="637.78" y="831.9" font-size="15.2" font-weight="bold" fill="#000" text-anchor="middle" >200</text>
<text x="866.11" y="831.9" font-size="15.2" font-weight="bold" fill="#000" text-anchor="middle" >300</text>
<text x="1094.44" y="831.9" font-size="15.2" font-weight="bold" fill="#000" text-anchor="middle" >400</text>
<text x="1322.77" y="831.9" font-size="15.2" font-weight="bold" fill="#000" text-anchor="middle" >500</text>
<text x="749.8" y="860.2" font-size="17" font-weight="bold" fill="#000" text-anchor="start" textLength="116.4" lengthAdjust="spacingAndGlyphs" >Frequency (Hz)</text>
<text x="63.5" y="886" font-size="15.4" font-weight="bold" fill="#ff0000" text-anchor="start" textLength="170.4" lengthAdjust="spacingAndGlyphs" >*T0=20/06/2018 21:38:03</text>
<text x="746.6" y="885.6" font-size="15.4" font-weight="bold" fill="#000" text-anchor="start" textLength="52.6" lengthAdjust="spacingAndGlyphs" >Avg=10</text>
<text x="1384" y="885.8" font-size="15.4" font-weight="bold" fill="#000" text-anchor="start" textLength="96.5" lengthAdjust="spacingAndGlyphs" >BW=0.187499</text>
<text transform="translate(85 673.2) rotate(-90)" font-size="17" font-weight="bold" text-anchor="middle" textLength="84" lengthAdjust="spacingAndGlyphs" fill="#000">Magnitude</text>
<text x="160.2" y="604.4" font-size="15.2" font-weight="bold" text-anchor="end" fill="#000">10</text>
<text x="160.2" y="598.2" font-size="9.8" font-weight="bold" text-anchor="start" fill="#000">-1</text>
<text x="160.2" y="687.1" font-size="15.2" font-weight="bold" text-anchor="end" fill="#000">10</text>
<text x="160.2" y="680.9" font-size="9.8" font-weight="bold" text-anchor="start" fill="#000">-2</text>
<text x="160.2" y="769.8" font-size="15.2" font-weight="bold" text-anchor="end" fill="#000">10</text>
<text x="160.2" y="763.6" font-size="9.8" font-weight="bold" text-anchor="start" fill="#000">-3</text>
</g>
</svg></body></html>
